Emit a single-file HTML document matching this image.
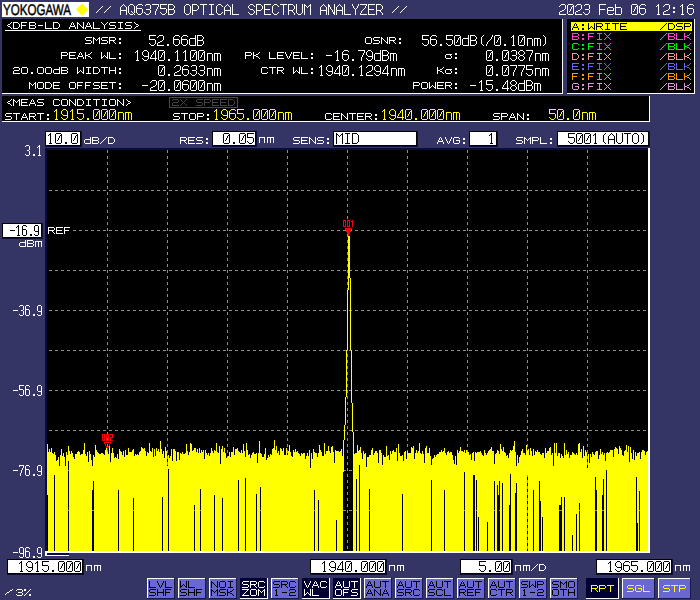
<!DOCTYPE html>
<html><head><meta charset="utf-8"><style>html,body{margin:0;padding:0;background:#343564;overflow:hidden}svg{display:block}</style></head>
<body><svg width="700" height="600" viewBox="0 0 700 600" shape-rendering="crispEdges">
<defs><path id="L2f" d="M6 0h1v1h-1zM5 1h1v1h-1zM4 2h1v1h-1zM3 3h1v1h-1zM2 4h1v1h-1zM1 5h1v1h-1zM0 6h1v1h-1z"/><path id="N41" d="M3 0h1v1h-1zM2 1h1v1h-1zM4 1h1v1h-1zM1 2h1v1h-1zM5 2h1v1h-1zM0 3h1v1h-1zM6 3h1v1h-1zM0 4h1v1h-1zM6 4h1v1h-1zM0 5h1v1h-1zM6 5h1v1h-1zM0 6h7v1h-7zM0 7h1v1h-1zM6 7h1v1h-1zM0 8h1v1h-1zM6 8h1v1h-1zM0 9h1v1h-1zM6 9h1v1h-1zM0 10h1v1h-1zM6 10h1v1h-1z"/><path id="N51" d="M2 0h3v1h-3zM1 1h1v1h-1zM5 1h1v1h-1zM0 2h1v1h-1zM6 2h1v1h-1zM0 3h1v1h-1zM6 3h1v1h-1zM0 4h1v1h-1zM6 4h1v1h-1zM0 5h1v1h-1zM6 5h1v1h-1zM0 6h1v1h-1zM6 6h1v1h-1zM0 7h1v1h-1zM3 7h1v1h-1zM6 7h1v1h-1zM0 8h1v1h-1zM4 8h1v1h-1zM6 8h1v1h-1zM1 9h1v1h-1zM5 9h1v1h-1zM2 10h3v1h-3zM6 10h1v1h-1z"/><path id="N36" d="M2 0h4v1h-4zM1 1h1v1h-1zM6 1h1v1h-1zM0 2h1v1h-1zM0 3h1v1h-1zM0 4h6v1h-6zM0 5h1v1h-1zM6 5h1v1h-1zM0 6h1v1h-1zM6 6h1v1h-1zM0 7h1v1h-1zM6 7h1v1h-1zM0 8h1v1h-1zM6 8h1v1h-1zM1 9h1v1h-1zM5 9h1v1h-1zM2 10h3v1h-3z"/><path id="N33" d="M2 0h4v1h-4zM1 1h1v1h-1zM6 1h1v1h-1zM6 2h1v1h-1zM6 3h1v1h-1zM6 4h1v1h-1zM2 5h4v1h-4zM6 6h1v1h-1zM6 7h1v1h-1zM0 8h1v1h-1zM6 8h1v1h-1zM1 9h1v1h-1zM5 9h1v1h-1zM2 10h3v1h-3z"/><path id="N37" d="M0 0h7v1h-7zM6 1h1v1h-1zM6 2h1v1h-1zM5 3h1v1h-1zM5 4h1v1h-1zM4 5h1v1h-1zM4 6h1v1h-1zM3 7h1v1h-1zM3 8h1v1h-1zM3 9h1v1h-1zM3 10h1v1h-1z"/><path id="N35" d="M0 0h7v1h-7zM0 1h1v1h-1zM0 2h1v1h-1zM0 3h1v1h-1zM0 4h6v1h-6zM6 5h1v1h-1zM6 6h1v1h-1zM6 7h1v1h-1zM0 8h1v1h-1zM6 8h1v1h-1zM1 9h1v1h-1zM5 9h1v1h-1zM2 10h3v1h-3z"/><path id="N42" d="M0 0h5v1h-5zM0 1h1v1h-1zM5 1h1v1h-1zM0 2h1v1h-1zM6 2h1v1h-1zM0 3h1v1h-1zM6 3h1v1h-1zM0 4h1v1h-1zM5 4h1v1h-1zM0 5h6v1h-6zM0 6h1v1h-1zM6 6h1v1h-1zM0 7h1v1h-1zM6 7h1v1h-1zM0 8h1v1h-1zM6 8h1v1h-1zM0 9h1v1h-1zM5 9h1v1h-1zM0 10h5v1h-5z"/><path id="N4f" d="M2 0h3v1h-3zM1 1h1v1h-1zM5 1h1v1h-1zM0 2h1v1h-1zM6 2h1v1h-1zM0 3h1v1h-1zM6 3h1v1h-1zM0 4h1v1h-1zM6 4h1v1h-1zM0 5h1v1h-1zM6 5h1v1h-1zM0 6h1v1h-1zM6 6h1v1h-1zM0 7h1v1h-1zM6 7h1v1h-1zM0 8h1v1h-1zM6 8h1v1h-1zM1 9h1v1h-1zM5 9h1v1h-1zM2 10h3v1h-3z"/><path id="N50" d="M0 0h5v1h-5zM0 1h1v1h-1zM5 1h1v1h-1zM0 2h1v1h-1zM6 2h1v1h-1zM0 3h1v1h-1zM6 3h1v1h-1zM0 4h1v1h-1zM6 4h1v1h-1zM0 5h1v1h-1zM5 5h1v1h-1zM0 6h5v1h-5zM0 7h1v1h-1zM0 8h1v1h-1zM0 9h1v1h-1zM0 10h1v1h-1z"/><path id="N54" d="M0 0h7v1h-7zM3 1h1v1h-1zM3 2h1v1h-1zM3 3h1v1h-1zM3 4h1v1h-1zM3 5h1v1h-1zM3 6h1v1h-1zM3 7h1v1h-1zM3 8h1v1h-1zM3 9h1v1h-1zM3 10h1v1h-1z"/><path id="N49" d="M1 0h5v1h-5zM3 1h1v1h-1zM3 2h1v1h-1zM3 3h1v1h-1zM3 4h1v1h-1zM3 5h1v1h-1zM3 6h1v1h-1zM3 7h1v1h-1zM3 8h1v1h-1zM3 9h1v1h-1zM1 10h5v1h-5z"/><path id="N43" d="M2 0h3v1h-3zM1 1h1v1h-1zM5 1h1v1h-1zM0 2h1v1h-1zM6 2h1v1h-1zM0 3h1v1h-1zM0 4h1v1h-1zM0 5h1v1h-1zM0 6h1v1h-1zM0 7h1v1h-1zM0 8h1v1h-1zM6 8h1v1h-1zM1 9h1v1h-1zM5 9h1v1h-1zM2 10h3v1h-3z"/><path id="N4c" d="M0 0h1v1h-1zM0 1h1v1h-1zM0 2h1v1h-1zM0 3h1v1h-1zM0 4h1v1h-1zM0 5h1v1h-1zM0 6h1v1h-1zM0 7h1v1h-1zM0 8h1v1h-1zM0 9h1v1h-1zM0 10h7v1h-7z"/><path id="N53" d="M2 0h3v1h-3zM1 1h1v1h-1zM5 1h1v1h-1zM0 2h1v1h-1zM6 2h1v1h-1zM0 3h1v1h-1zM1 4h1v1h-1zM2 5h3v1h-3zM5 6h1v1h-1zM6 7h1v1h-1zM0 8h1v1h-1zM6 8h1v1h-1zM1 9h1v1h-1zM5 9h1v1h-1zM2 10h3v1h-3z"/><path id="N45" d="M0 0h7v1h-7zM0 1h1v1h-1zM0 2h1v1h-1zM0 3h1v1h-1zM0 4h1v1h-1zM0 5h6v1h-6zM0 6h1v1h-1zM0 7h1v1h-1zM0 8h1v1h-1zM0 9h1v1h-1zM0 10h7v1h-7z"/><path id="N52" d="M0 0h5v1h-5zM0 1h1v1h-1zM5 1h1v1h-1zM0 2h1v1h-1zM6 2h1v1h-1zM0 3h1v1h-1zM6 3h1v1h-1zM0 4h1v1h-1zM6 4h1v1h-1zM0 5h1v1h-1zM5 5h1v1h-1zM0 6h5v1h-5zM0 7h1v1h-1zM4 7h1v1h-1zM0 8h1v1h-1zM5 8h1v1h-1zM0 9h1v1h-1zM6 9h1v1h-1zM0 10h1v1h-1zM6 10h1v1h-1z"/><path id="N55" d="M0 0h1v1h-1zM6 0h1v1h-1zM0 1h1v1h-1zM6 1h1v1h-1zM0 2h1v1h-1zM6 2h1v1h-1zM0 3h1v1h-1zM6 3h1v1h-1zM0 4h1v1h-1zM6 4h1v1h-1zM0 5h1v1h-1zM6 5h1v1h-1zM0 6h1v1h-1zM6 6h1v1h-1zM0 7h1v1h-1zM6 7h1v1h-1zM0 8h1v1h-1zM6 8h1v1h-1zM1 9h1v1h-1zM5 9h1v1h-1zM2 10h3v1h-3z"/><path id="N4d" d="M0 0h1v1h-1zM6 0h1v1h-1zM0 1h2v1h-2zM5 1h2v1h-2zM0 2h1v1h-1zM2 2h1v1h-1zM4 2h1v1h-1zM6 2h1v1h-1zM0 3h1v1h-1zM3 3h1v1h-1zM6 3h1v1h-1zM0 4h1v1h-1zM6 4h1v1h-1zM0 5h1v1h-1zM6 5h1v1h-1zM0 6h1v1h-1zM6 6h1v1h-1zM0 7h1v1h-1zM6 7h1v1h-1zM0 8h1v1h-1zM6 8h1v1h-1zM0 9h1v1h-1zM6 9h1v1h-1zM0 10h1v1h-1zM6 10h1v1h-1z"/><path id="N4e" d="M0 0h1v1h-1zM6 0h1v1h-1zM0 1h2v1h-2zM6 1h1v1h-1zM0 2h2v1h-2zM6 2h1v1h-1zM0 3h1v1h-1zM2 3h1v1h-1zM6 3h1v1h-1zM0 4h1v1h-1zM2 4h1v1h-1zM6 4h1v1h-1zM0 5h1v1h-1zM3 5h1v1h-1zM6 5h1v1h-1zM0 6h1v1h-1zM4 6h1v1h-1zM6 6h1v1h-1zM0 7h1v1h-1zM4 7h1v1h-1zM6 7h1v1h-1zM0 8h1v1h-1zM5 8h2v1h-2zM0 9h1v1h-1zM5 9h2v1h-2zM0 10h1v1h-1zM6 10h1v1h-1z"/><path id="N59" d="M0 0h1v1h-1zM6 0h1v1h-1zM0 1h1v1h-1zM6 1h1v1h-1zM1 2h1v1h-1zM5 2h1v1h-1zM1 3h1v1h-1zM5 3h1v1h-1zM2 4h1v1h-1zM4 4h1v1h-1zM3 5h1v1h-1zM3 6h1v1h-1zM3 7h1v1h-1zM3 8h1v1h-1zM3 9h1v1h-1zM3 10h1v1h-1z"/><path id="N5a" d="M0 0h7v1h-7zM6 1h1v1h-1zM5 2h1v1h-1zM5 3h1v1h-1zM4 4h1v1h-1zM3 5h1v1h-1zM2 6h1v1h-1zM1 7h1v1h-1zM1 8h1v1h-1zM0 9h1v1h-1zM0 10h7v1h-7z"/><path id="N32" d="M2 0h4v1h-4zM1 1h1v1h-1zM6 1h1v1h-1zM0 2h1v1h-1zM6 2h1v1h-1zM6 3h1v1h-1zM6 4h1v1h-1zM5 5h1v1h-1zM3 6h2v1h-2zM1 7h2v1h-2zM0 8h1v1h-1zM0 9h1v1h-1zM0 10h7v1h-7z"/><path id="N30" d="M1 0h5v1h-5zM0 1h1v1h-1zM6 1h1v1h-1zM0 2h1v1h-1zM5 2h2v1h-2zM0 3h1v1h-1zM4 3h1v1h-1zM6 3h1v1h-1zM0 4h1v1h-1zM4 4h1v1h-1zM6 4h1v1h-1zM0 5h1v1h-1zM3 5h1v1h-1zM6 5h1v1h-1zM0 6h1v1h-1zM3 6h1v1h-1zM6 6h1v1h-1zM0 7h1v1h-1zM2 7h1v1h-1zM6 7h1v1h-1zM0 8h1v1h-1zM6 8h1v1h-1zM0 9h1v1h-1zM6 9h1v1h-1zM1 10h5v1h-5z"/><path id="N46" d="M0 0h7v1h-7zM0 1h1v1h-1zM0 2h1v1h-1zM0 3h1v1h-1zM0 4h1v1h-1zM0 5h6v1h-6zM0 6h1v1h-1zM0 7h1v1h-1zM0 8h1v1h-1zM0 9h1v1h-1zM0 10h1v1h-1z"/><path id="N65" d="M1 3h5v1h-5zM0 4h1v1h-1zM6 4h1v1h-1zM0 5h1v1h-1zM6 5h1v1h-1zM0 6h7v1h-7zM0 7h1v1h-1zM0 8h1v1h-1zM0 9h1v1h-1zM6 9h1v1h-1zM1 10h5v1h-5z"/><path id="N62" d="M0 0h1v1h-1zM0 1h1v1h-1zM0 2h1v1h-1zM0 3h6v1h-6zM0 4h1v1h-1zM6 4h1v1h-1zM0 5h1v1h-1zM6 5h1v1h-1zM0 6h1v1h-1zM6 6h1v1h-1zM0 7h1v1h-1zM6 7h1v1h-1zM0 8h1v1h-1zM6 8h1v1h-1zM0 9h1v1h-1zM6 9h1v1h-1zM0 10h6v1h-6z"/><path id="N31" d="M3 0h1v1h-1zM2 1h2v1h-2zM1 2h1v1h-1zM3 2h1v1h-1zM3 3h1v1h-1zM3 4h1v1h-1zM3 5h1v1h-1zM3 6h1v1h-1zM3 7h1v1h-1zM3 8h1v1h-1zM3 9h1v1h-1zM2 10h3v1h-3z"/><path id="N3a" d="M2 3h2v1h-2zM2 4h2v1h-2zM2 7h2v1h-2zM2 8h2v1h-2z"/><path id="L3c" d="M6 0h1v1h-1zM5 1h1v1h-1zM3 2h2v1h-2zM2 3h1v1h-1zM3 4h2v1h-2zM5 5h1v1h-1zM6 6h1v1h-1z"/><path id="L44" d="M0 0h5v1h-5zM0 1h1v1h-1zM5 1h1v1h-1zM0 2h1v1h-1zM6 2h1v1h-1zM0 3h1v1h-1zM6 3h1v1h-1zM0 4h1v1h-1zM6 4h1v1h-1zM0 5h1v1h-1zM5 5h1v1h-1zM0 6h5v1h-5z"/><path id="L46" d="M0 0h6v1h-6zM0 1h1v1h-1zM0 2h1v1h-1zM0 3h5v1h-5zM0 4h1v1h-1zM0 5h1v1h-1zM0 6h1v1h-1z"/><path id="L42" d="M0 0h6v1h-6zM0 1h1v1h-1zM6 1h1v1h-1zM0 2h1v1h-1zM6 2h1v1h-1zM0 3h6v1h-6zM0 4h1v1h-1zM6 4h1v1h-1zM0 5h1v1h-1zM6 5h1v1h-1zM0 6h6v1h-6z"/><path id="L2d" d="M1 3h5v1h-5z"/><path id="L4c" d="M0 0h1v1h-1zM0 1h1v1h-1zM0 2h1v1h-1zM0 3h1v1h-1zM0 4h1v1h-1zM0 5h1v1h-1zM0 6h7v1h-7z"/><path id="L41" d="M3 0h1v1h-1zM2 1h1v1h-1zM4 1h1v1h-1zM2 2h1v1h-1zM4 2h1v1h-1zM1 3h1v1h-1zM5 3h1v1h-1zM1 4h5v1h-5zM0 5h1v1h-1zM6 5h1v1h-1zM0 6h1v1h-1zM6 6h1v1h-1z"/><path id="L4e" d="M0 0h1v1h-1zM6 0h1v1h-1zM0 1h2v1h-2zM6 1h1v1h-1zM0 2h1v1h-1zM2 2h1v1h-1zM6 2h1v1h-1zM0 3h1v1h-1zM3 3h1v1h-1zM6 3h1v1h-1zM0 4h1v1h-1zM4 4h1v1h-1zM6 4h1v1h-1zM0 5h1v1h-1zM5 5h2v1h-2zM0 6h1v1h-1zM6 6h1v1h-1z"/><path id="L59" d="M0 0h1v1h-1zM6 0h1v1h-1zM1 1h1v1h-1zM5 1h1v1h-1zM2 2h1v1h-1zM4 2h1v1h-1zM3 3h1v1h-1zM3 4h1v1h-1zM3 5h1v1h-1zM3 6h1v1h-1z"/><path id="L53" d="M1 0h6v1h-6zM0 1h1v1h-1zM0 2h1v1h-1zM1 3h5v1h-5zM6 4h1v1h-1zM6 5h1v1h-1zM0 6h6v1h-6z"/><path id="L49" d="M1 0h5v1h-5zM3 1h1v1h-1zM3 2h1v1h-1zM3 3h1v1h-1zM3 4h1v1h-1zM3 5h1v1h-1zM1 6h5v1h-5z"/><path id="L3e" d="M1 0h1v1h-1zM2 1h1v1h-1zM3 2h2v1h-2zM5 3h1v1h-1zM3 4h2v1h-2zM2 5h1v1h-1zM1 6h1v1h-1z"/><path id="L4d" d="M0 0h1v1h-1zM6 0h1v1h-1zM0 1h2v1h-2zM5 1h2v1h-2zM0 2h1v1h-1zM2 2h1v1h-1zM4 2h1v1h-1zM6 2h1v1h-1zM0 3h1v1h-1zM3 3h1v1h-1zM6 3h1v1h-1zM0 4h1v1h-1zM6 4h1v1h-1zM0 5h1v1h-1zM6 5h1v1h-1zM0 6h1v1h-1zM6 6h1v1h-1z"/><path id="L52" d="M0 0h6v1h-6zM0 1h1v1h-1zM6 1h1v1h-1zM0 2h1v1h-1zM6 2h1v1h-1zM0 3h6v1h-6zM0 4h1v1h-1zM4 4h1v1h-1zM0 5h1v1h-1zM5 5h1v1h-1zM0 6h1v1h-1zM6 6h1v1h-1z"/><path id="L3a" d="M2 1h2v1h-2zM2 2h2v1h-2zM2 5h2v1h-2zM2 6h2v1h-2z"/><path id="N2e" d="M2 9h2v1h-2zM2 10h2v1h-2z"/><path id="N64" d="M6 0h1v1h-1zM6 1h1v1h-1zM6 2h1v1h-1zM1 3h6v1h-6zM0 4h1v1h-1zM6 4h1v1h-1zM0 5h1v1h-1zM6 5h1v1h-1zM0 6h1v1h-1zM6 6h1v1h-1zM0 7h1v1h-1zM6 7h1v1h-1zM0 8h1v1h-1zM6 8h1v1h-1zM0 9h1v1h-1zM6 9h1v1h-1zM1 10h6v1h-6z"/><path id="L4f" d="M1 0h5v1h-5zM0 1h1v1h-1zM6 1h1v1h-1zM0 2h1v1h-1zM6 2h1v1h-1zM0 3h1v1h-1zM6 3h1v1h-1zM0 4h1v1h-1zM6 4h1v1h-1zM0 5h1v1h-1zM6 5h1v1h-1zM1 6h5v1h-5z"/><path id="N28" d="M5 0h1v1h-1zM4 1h1v1h-1zM3 2h1v1h-1zM3 3h1v1h-1zM3 4h1v1h-1zM3 5h1v1h-1zM3 6h1v1h-1zM3 7h1v1h-1zM3 8h1v1h-1zM4 9h1v1h-1zM5 10h1v1h-1z"/><path id="N2f" d="M6 0h1v1h-1zM6 1h1v1h-1zM5 2h1v1h-1zM5 3h1v1h-1zM4 4h1v1h-1zM3 5h1v1h-1zM2 6h1v1h-1zM1 7h1v1h-1zM1 8h1v1h-1zM0 9h1v1h-1zM0 10h1v1h-1z"/><path id="N6e" d="M1 3h5v1h-5zM1 4h1v1h-1zM6 4h1v1h-1zM1 5h1v1h-1zM6 5h1v1h-1zM1 6h1v1h-1zM6 6h1v1h-1zM1 7h1v1h-1zM6 7h1v1h-1zM1 8h1v1h-1zM6 8h1v1h-1zM1 9h1v1h-1zM6 9h1v1h-1zM1 10h1v1h-1zM6 10h1v1h-1z"/><path id="N6d" d="M0 3h6v1h-6zM0 4h1v1h-1zM3 4h1v1h-1zM6 4h1v1h-1zM0 5h1v1h-1zM3 5h1v1h-1zM6 5h1v1h-1zM0 6h1v1h-1zM3 6h1v1h-1zM6 6h1v1h-1zM0 7h1v1h-1zM3 7h1v1h-1zM6 7h1v1h-1zM0 8h1v1h-1zM3 8h1v1h-1zM6 8h1v1h-1zM0 9h1v1h-1zM3 9h1v1h-1zM6 9h1v1h-1zM0 10h1v1h-1zM3 10h1v1h-1zM6 10h1v1h-1z"/><path id="N29" d="M1 0h1v1h-1zM2 1h1v1h-1zM3 2h1v1h-1zM3 3h1v1h-1zM3 4h1v1h-1zM3 5h1v1h-1zM3 6h1v1h-1zM3 7h1v1h-1zM3 8h1v1h-1zM2 9h1v1h-1zM1 10h1v1h-1z"/><path id="L50" d="M0 0h6v1h-6zM0 1h1v1h-1zM6 1h1v1h-1zM0 2h1v1h-1zM6 2h1v1h-1zM0 3h6v1h-6zM0 4h1v1h-1zM0 5h1v1h-1zM0 6h1v1h-1z"/><path id="L45" d="M0 0h7v1h-7zM0 1h1v1h-1zM0 2h1v1h-1zM0 3h6v1h-6zM0 4h1v1h-1zM0 5h1v1h-1zM0 6h7v1h-7z"/><path id="L4b" d="M0 0h1v1h-1zM6 0h1v1h-1zM0 1h1v1h-1zM5 1h1v1h-1zM0 2h1v1h-1zM3 2h2v1h-2zM0 3h3v1h-3zM0 4h1v1h-1zM3 4h2v1h-2zM0 5h1v1h-1zM5 5h1v1h-1zM0 6h1v1h-1zM6 6h1v1h-1z"/><path id="L57" d="M0 0h1v1h-1zM6 0h1v1h-1zM0 1h1v1h-1zM6 1h1v1h-1zM0 2h1v1h-1zM6 2h1v1h-1zM0 3h1v1h-1zM3 3h1v1h-1zM6 3h1v1h-1zM0 4h1v1h-1zM2 4h1v1h-1zM4 4h1v1h-1zM6 4h1v1h-1zM0 5h2v1h-2zM5 5h2v1h-2zM0 6h1v1h-1zM6 6h1v1h-1z"/><path id="N39" d="M2 0h3v1h-3zM1 1h1v1h-1zM5 1h1v1h-1zM0 2h1v1h-1zM6 2h1v1h-1zM0 3h1v1h-1zM6 3h1v1h-1zM0 4h1v1h-1zM6 4h1v1h-1zM1 5h1v1h-1zM6 5h1v1h-1zM2 6h5v1h-5zM6 7h1v1h-1zM0 8h1v1h-1zM6 8h1v1h-1zM1 9h1v1h-1zM5 9h1v1h-1zM2 10h3v1h-3z"/><path id="N34" d="M5 0h1v1h-1zM4 1h2v1h-2zM3 2h1v1h-1zM5 2h1v1h-1zM3 3h1v1h-1zM5 3h1v1h-1zM2 4h1v1h-1zM5 4h1v1h-1zM1 5h1v1h-1zM5 5h1v1h-1zM1 6h1v1h-1zM5 6h1v1h-1zM0 7h1v1h-1zM5 7h1v1h-1zM0 8h7v1h-7zM5 9h1v1h-1zM5 10h1v1h-1z"/><path id="L56" d="M0 0h1v1h-1zM6 0h1v1h-1zM0 1h1v1h-1zM6 1h1v1h-1zM1 2h1v1h-1zM5 2h1v1h-1zM1 3h1v1h-1zM5 3h1v1h-1zM2 4h1v1h-1zM4 4h1v1h-1zM2 5h1v1h-1zM4 5h1v1h-1zM3 6h1v1h-1z"/><path id="N2d" d="M0 5h6v1h-6z"/><path id="L3c3" d="M1 2h6v1h-6zM0 3h1v1h-1zM5 3h1v1h-1zM0 4h1v1h-1zM6 4h1v1h-1zM0 5h1v1h-1zM6 5h1v1h-1zM1 6h5v1h-5z"/><path id="N38" d="M2 0h3v1h-3zM1 1h1v1h-1zM5 1h1v1h-1zM0 2h1v1h-1zM6 2h1v1h-1zM0 3h1v1h-1zM6 3h1v1h-1zM1 4h1v1h-1zM5 4h1v1h-1zM2 5h3v1h-3zM1 6h1v1h-1zM5 6h1v1h-1zM0 7h1v1h-1zM6 7h1v1h-1zM0 8h1v1h-1zM6 8h1v1h-1zM1 9h1v1h-1zM5 9h1v1h-1zM2 10h3v1h-3z"/><path id="L32" d="M1 0h5v1h-5zM0 1h1v1h-1zM6 1h1v1h-1zM6 2h1v1h-1zM1 3h5v1h-5zM0 4h1v1h-1zM0 5h1v1h-1zM0 6h7v1h-7z"/><path id="L30" d="M1 0h5v1h-5zM0 1h1v1h-1zM6 1h1v1h-1zM0 2h1v1h-1zM6 2h1v1h-1zM0 3h1v1h-1zM6 3h1v1h-1zM0 4h1v1h-1zM6 4h1v1h-1zM0 5h1v1h-1zM6 5h1v1h-1zM1 6h5v1h-5z"/><path id="L2e" d="M2 5h2v1h-2zM2 6h2v1h-2z"/><path id="L64" d="M6 0h1v1h-1zM6 1h1v1h-1zM1 2h6v1h-6zM0 3h1v1h-1zM6 3h1v1h-1zM0 4h1v1h-1zM6 4h1v1h-1zM0 5h1v1h-1zM6 5h1v1h-1zM1 6h6v1h-6z"/><path id="L54" d="M0 0h7v1h-7zM3 1h1v1h-1zM3 2h1v1h-1zM3 3h1v1h-1zM3 4h1v1h-1zM3 5h1v1h-1zM3 6h1v1h-1z"/><path id="L48" d="M0 0h1v1h-1zM6 0h1v1h-1zM0 1h1v1h-1zM6 1h1v1h-1zM0 2h1v1h-1zM6 2h1v1h-1zM0 3h7v1h-7zM0 4h1v1h-1zM6 4h1v1h-1zM0 5h1v1h-1zM6 5h1v1h-1zM0 6h1v1h-1zM6 6h1v1h-1z"/><path id="L43" d="M1 0h5v1h-5zM0 1h1v1h-1zM6 1h1v1h-1zM0 2h1v1h-1zM0 3h1v1h-1zM0 4h1v1h-1zM0 5h1v1h-1zM6 5h1v1h-1zM1 6h5v1h-5z"/><path id="L58" d="M0 0h1v1h-1zM6 0h1v1h-1zM1 1h1v1h-1zM5 1h1v1h-1zM2 2h1v1h-1zM4 2h1v1h-1zM3 3h1v1h-1zM2 4h1v1h-1zM4 4h1v1h-1zM1 5h1v1h-1zM5 5h1v1h-1zM0 6h1v1h-1zM6 6h1v1h-1z"/><path id="L47" d="M1 0h5v1h-5zM0 1h1v1h-1zM6 1h1v1h-1zM0 2h1v1h-1zM0 3h1v1h-1zM3 3h4v1h-4zM0 4h1v1h-1zM6 4h1v1h-1zM0 5h1v1h-1zM6 5h1v1h-1zM1 6h5v1h-5z"/><path id="L6e" d="M0 1h6v1h-6zM0 2h1v1h-1zM5 2h1v1h-1zM0 3h1v1h-1zM5 3h1v1h-1zM0 4h1v1h-1zM5 4h1v1h-1zM0 5h1v1h-1zM5 5h1v1h-1zM0 6h1v1h-1zM5 6h1v1h-1z"/><path id="L6d" d="M0 1h7v1h-7zM0 2h1v1h-1zM3 2h1v1h-1zM6 2h1v1h-1zM0 3h1v1h-1zM3 3h1v1h-1zM6 3h1v1h-1zM0 4h1v1h-1zM3 4h1v1h-1zM6 4h1v1h-1zM0 5h1v1h-1zM3 5h1v1h-1zM6 5h1v1h-1zM0 6h1v1h-1zM3 6h1v1h-1zM6 6h1v1h-1z"/><path id="N44" d="M0 0h5v1h-5zM0 1h1v1h-1zM5 1h1v1h-1zM0 2h1v1h-1zM6 2h1v1h-1zM0 3h1v1h-1zM6 3h1v1h-1zM0 4h1v1h-1zM6 4h1v1h-1zM0 5h1v1h-1zM6 5h1v1h-1zM0 6h1v1h-1zM6 6h1v1h-1zM0 7h1v1h-1zM6 7h1v1h-1zM0 8h1v1h-1zM6 8h1v1h-1zM0 9h1v1h-1zM5 9h1v1h-1zM0 10h5v1h-5z"/><path id="M30" d="M0 0h3v1h-3zM0 1h1v1h-1zM2 1h1v1h-1zM0 2h1v1h-1zM2 2h1v1h-1zM0 3h1v1h-1zM2 3h1v1h-1zM0 4h1v1h-1zM2 4h1v1h-1zM0 5h1v1h-1zM2 5h1v1h-1zM0 6h3v1h-3z"/><path id="M31" d="M1 0h1v1h-1zM0 1h2v1h-2zM1 2h1v1h-1zM1 3h1v1h-1zM1 4h1v1h-1zM1 5h1v1h-1zM1 6h1v1h-1z"/><path id="M32" d="M0 0h3v1h-3zM2 1h1v1h-1zM2 2h1v1h-1zM0 3h3v1h-3zM0 4h1v1h-1zM0 5h1v1h-1zM0 6h3v1h-3z"/><path id="A33" d="M1 0h3v1h-3zM0 1h1v1h-1zM4 1h1v1h-1zM4 2h1v1h-1zM4 3h1v1h-1zM4 4h1v1h-1zM2 5h2v1h-2zM4 6h1v1h-1zM4 7h1v1h-1zM4 8h1v1h-1zM0 9h1v1h-1zM4 9h1v1h-1zM1 10h3v1h-3z"/><path id="A2e" d="M2 9h2v1h-2zM2 10h2v1h-2z"/><path id="A31" d="M2 0h1v1h-1zM1 1h2v1h-2zM0 2h1v1h-1zM2 2h1v1h-1zM2 3h1v1h-1zM2 4h1v1h-1zM2 5h1v1h-1zM2 6h1v1h-1zM2 7h1v1h-1zM2 8h1v1h-1zM2 9h1v1h-1zM1 10h3v1h-3z"/><path id="A2d" d="M0 5h5v1h-5z"/><path id="A36" d="M1 0h3v1h-3zM0 1h1v1h-1zM4 1h1v1h-1zM0 2h1v1h-1zM0 3h1v1h-1zM0 4h4v1h-4zM0 5h1v1h-1zM4 5h1v1h-1zM0 6h1v1h-1zM4 6h1v1h-1zM0 7h1v1h-1zM4 7h1v1h-1zM0 8h1v1h-1zM4 8h1v1h-1zM0 9h1v1h-1zM4 9h1v1h-1zM1 10h3v1h-3z"/><path id="A39" d="M1 0h3v1h-3zM0 1h1v1h-1zM4 1h1v1h-1zM0 2h1v1h-1zM4 2h1v1h-1zM0 3h1v1h-1zM4 3h1v1h-1zM0 4h1v1h-1zM4 4h1v1h-1zM0 5h1v1h-1zM4 5h1v1h-1zM1 6h4v1h-4zM4 7h1v1h-1zM4 8h1v1h-1zM0 9h1v1h-1zM4 9h1v1h-1zM1 10h3v1h-3z"/><path id="A35" d="M0 0h5v1h-5zM0 1h1v1h-1zM0 2h1v1h-1zM0 3h1v1h-1zM0 4h4v1h-4zM4 5h1v1h-1zM4 6h1v1h-1zM4 7h1v1h-1zM4 8h1v1h-1zM0 9h1v1h-1zM4 9h1v1h-1zM1 10h3v1h-3z"/><path id="A37" d="M0 0h5v1h-5zM0 1h1v1h-1zM4 1h1v1h-1zM4 2h1v1h-1zM3 3h1v1h-1zM3 4h1v1h-1zM2 5h1v1h-1zM2 6h1v1h-1zM2 7h1v1h-1zM1 8h1v1h-1zM1 9h1v1h-1zM1 10h1v1h-1z"/><path id="L2044" d="M7 0h1v1h-1zM5 1h2v1h-2zM4 2h1v1h-1zM2 3h2v1h-2zM1 4h1v1h-1zM0 5h1v1h-1z"/><path id="L33" d="M1 0h5v1h-5zM0 1h1v1h-1zM6 1h1v1h-1zM6 2h1v1h-1zM2 3h4v1h-4zM6 4h1v1h-1zM0 5h1v1h-1zM6 5h1v1h-1zM1 6h5v1h-5z"/><path id="L25" d="M0 0h2v1h-2zM6 0h1v1h-1zM0 1h2v1h-2zM5 1h1v1h-1zM4 2h1v1h-1zM3 3h1v1h-1zM2 4h1v1h-1zM1 5h1v1h-1zM5 5h2v1h-2zM0 6h1v1h-1zM5 6h2v1h-2z"/><path id="L5a" d="M0 0h7v1h-7zM5 1h1v1h-1zM4 2h1v1h-1zM3 3h1v1h-1zM2 4h1v1h-1zM1 5h1v1h-1zM0 6h7v1h-7z"/><path id="L31" d="M3 0h1v1h-1zM2 1h2v1h-2zM3 2h1v1h-1zM3 3h1v1h-1zM3 4h1v1h-1zM3 5h1v1h-1zM2 6h3v1h-3z"/><path id="L55" d="M0 0h1v1h-1zM6 0h1v1h-1zM0 1h1v1h-1zM6 1h1v1h-1zM0 2h1v1h-1zM6 2h1v1h-1zM0 3h1v1h-1zM6 3h1v1h-1zM0 4h1v1h-1zM6 4h1v1h-1zM0 5h1v1h-1zM6 5h1v1h-1zM1 6h5v1h-5z"/></defs>
<rect x="0" y="0" width="700" height="600" fill="#343564" />
<rect x="2" y="2" width="87" height="15" fill="#fff" />
<text x="3" y="15" font-family="Liberation Sans" font-size="15.4" fill="#000" stroke="#000" stroke-width="0.45" textLength="68" lengthAdjust="spacingAndGlyphs" style="text-rendering:geometricPrecision">YOKOGAWA</text>
<polygon points="82,3.5 88,9.6 82,15.7 76,9.6" fill="#ffff00" shape-rendering="geometricPrecision"/>
<g fill="#fff"><use href="#L2f" xlink:href="#L2f" x="96" y="6"/><use href="#L2f" xlink:href="#L2f" x="104" y="6"/></g>
<g fill="#fff"><use href="#N41" xlink:href="#N41" x="120" y="4"/><use href="#N51" xlink:href="#N51" x="128" y="4"/><use href="#N36" xlink:href="#N36" x="136" y="4"/><use href="#N33" xlink:href="#N33" x="144" y="4"/><use href="#N37" xlink:href="#N37" x="152" y="4"/><use href="#N35" xlink:href="#N35" x="160" y="4"/><use href="#N42" xlink:href="#N42" x="168" y="4"/><use href="#N4f" xlink:href="#N4f" x="184" y="4"/><use href="#N50" xlink:href="#N50" x="192" y="4"/><use href="#N54" xlink:href="#N54" x="200" y="4"/><use href="#N49" xlink:href="#N49" x="208" y="4"/><use href="#N43" xlink:href="#N43" x="216" y="4"/><use href="#N41" xlink:href="#N41" x="224" y="4"/><use href="#N4c" xlink:href="#N4c" x="232" y="4"/><use href="#N53" xlink:href="#N53" x="248" y="4"/><use href="#N50" xlink:href="#N50" x="256" y="4"/><use href="#N45" xlink:href="#N45" x="264" y="4"/><use href="#N43" xlink:href="#N43" x="272" y="4"/><use href="#N54" xlink:href="#N54" x="280" y="4"/><use href="#N52" xlink:href="#N52" x="288" y="4"/><use href="#N55" xlink:href="#N55" x="296" y="4"/><use href="#N4d" xlink:href="#N4d" x="304" y="4"/><use href="#N41" xlink:href="#N41" x="320" y="4"/><use href="#N4e" xlink:href="#N4e" x="328" y="4"/><use href="#N41" xlink:href="#N41" x="336" y="4"/><use href="#N4c" xlink:href="#N4c" x="344" y="4"/><use href="#N59" xlink:href="#N59" x="352" y="4"/><use href="#N5a" xlink:href="#N5a" x="360" y="4"/><use href="#N45" xlink:href="#N45" x="368" y="4"/><use href="#N52" xlink:href="#N52" x="376" y="4"/></g>
<g fill="#fff"><use href="#L2f" xlink:href="#L2f" x="392" y="6"/><use href="#L2f" xlink:href="#L2f" x="400" y="6"/></g>
<g fill="#fff"><use href="#N32" xlink:href="#N32" x="559" y="4"/><use href="#N30" xlink:href="#N30" x="567" y="4"/><use href="#N32" xlink:href="#N32" x="575" y="4"/><use href="#N33" xlink:href="#N33" x="583" y="4"/><use href="#N46" xlink:href="#N46" x="599" y="4"/><use href="#N65" xlink:href="#N65" x="607" y="4"/><use href="#N62" xlink:href="#N62" x="615" y="4"/><use href="#N30" xlink:href="#N30" x="631" y="4"/><use href="#N36" xlink:href="#N36" x="639" y="4"/><use href="#N31" xlink:href="#N31" x="655" y="4"/><use href="#N32" xlink:href="#N32" x="663" y="4"/><use href="#N3a" xlink:href="#N3a" x="671" y="4"/><use href="#N31" xlink:href="#N31" x="679" y="4"/><use href="#N36" xlink:href="#N36" x="687" y="4"/></g>
<rect x="2" y="19" width="561" height="75" fill="#fff" />
<rect x="2" y="19" width="560" height="74" fill="#000" />
<g fill="#fff"><use href="#L3c" xlink:href="#L3c" x="5" y="22"/><use href="#L44" xlink:href="#L44" x="13" y="22"/><use href="#L46" xlink:href="#L46" x="21" y="22"/><use href="#L42" xlink:href="#L42" x="29" y="22"/><use href="#L2d" xlink:href="#L2d" x="37" y="22"/><use href="#L4c" xlink:href="#L4c" x="45" y="22"/><use href="#L44" xlink:href="#L44" x="53" y="22"/><use href="#L41" xlink:href="#L41" x="69" y="22"/><use href="#L4e" xlink:href="#L4e" x="77" y="22"/><use href="#L41" xlink:href="#L41" x="85" y="22"/><use href="#L4c" xlink:href="#L4c" x="93" y="22"/><use href="#L59" xlink:href="#L59" x="101" y="22"/><use href="#L53" xlink:href="#L53" x="109" y="22"/><use href="#L49" xlink:href="#L49" x="117" y="22"/><use href="#L53" xlink:href="#L53" x="125" y="22"/><use href="#L3e" xlink:href="#L3e" x="133" y="22"/></g>
<rect x="5" y="30" width="136" height="1" fill="#fff" />
<g fill="#fff"><use href="#L53" xlink:href="#L53" x="85" y="37"/><use href="#L4d" xlink:href="#L4d" x="93" y="37"/><use href="#L53" xlink:href="#L53" x="101" y="37"/><use href="#L52" xlink:href="#L52" x="109" y="37"/><use href="#L3a" xlink:href="#L3a" x="117" y="37"/></g>
<g fill="#fff"><use href="#N35" xlink:href="#N35" x="149" y="35"/><use href="#N32" xlink:href="#N32" x="157" y="35"/><use href="#N2e" xlink:href="#N2e" x="165" y="35"/><use href="#N36" xlink:href="#N36" x="173" y="35"/><use href="#N36" xlink:href="#N36" x="181" y="35"/><use href="#N64" xlink:href="#N64" x="189" y="35"/><use href="#N42" xlink:href="#N42" x="197" y="35"/></g>
<g fill="#fff"><use href="#L4f" xlink:href="#L4f" x="365" y="37"/><use href="#L53" xlink:href="#L53" x="373" y="37"/><use href="#L4e" xlink:href="#L4e" x="381" y="37"/><use href="#L52" xlink:href="#L52" x="389" y="37"/><use href="#L3a" xlink:href="#L3a" x="397" y="37"/></g>
<g fill="#fff"><use href="#N35" xlink:href="#N35" x="422" y="35"/><use href="#N36" xlink:href="#N36" x="430" y="35"/><use href="#N2e" xlink:href="#N2e" x="438" y="35"/><use href="#N35" xlink:href="#N35" x="446" y="35"/><use href="#N30" xlink:href="#N30" x="454" y="35"/><use href="#N64" xlink:href="#N64" x="462" y="35"/><use href="#N42" xlink:href="#N42" x="470" y="35"/><use href="#N28" xlink:href="#N28" x="478" y="35"/><use href="#N2f" xlink:href="#N2f" x="486" y="35"/><use href="#N30" xlink:href="#N30" x="494" y="35"/><use href="#N2e" xlink:href="#N2e" x="502" y="35"/><use href="#N31" xlink:href="#N31" x="510" y="35"/><use href="#N30" xlink:href="#N30" x="518" y="35"/><use href="#N6e" xlink:href="#N6e" x="526" y="35"/><use href="#N6d" xlink:href="#N6d" x="534" y="35"/><use href="#N29" xlink:href="#N29" x="542" y="35"/></g>
<g fill="#fff"><use href="#L50" xlink:href="#L50" x="61" y="52"/><use href="#L45" xlink:href="#L45" x="69" y="52"/><use href="#L41" xlink:href="#L41" x="77" y="52"/><use href="#L4b" xlink:href="#L4b" x="85" y="52"/><use href="#L57" xlink:href="#L57" x="101" y="52"/><use href="#L4c" xlink:href="#L4c" x="109" y="52"/><use href="#L3a" xlink:href="#L3a" x="117" y="52"/></g>
<g fill="#fff"><use href="#N31" xlink:href="#N31" x="134" y="50"/><use href="#N39" xlink:href="#N39" x="142" y="50"/><use href="#N34" xlink:href="#N34" x="150" y="50"/><use href="#N30" xlink:href="#N30" x="158" y="50"/><use href="#N2e" xlink:href="#N2e" x="166" y="50"/><use href="#N31" xlink:href="#N31" x="174" y="50"/><use href="#N31" xlink:href="#N31" x="182" y="50"/><use href="#N30" xlink:href="#N30" x="190" y="50"/><use href="#N30" xlink:href="#N30" x="198" y="50"/><use href="#N6e" xlink:href="#N6e" x="206" y="50"/><use href="#N6d" xlink:href="#N6d" x="214" y="50"/></g>
<g fill="#fff"><use href="#L50" xlink:href="#L50" x="245" y="52"/><use href="#L4b" xlink:href="#L4b" x="253" y="52"/><use href="#L4c" xlink:href="#L4c" x="269" y="52"/><use href="#L45" xlink:href="#L45" x="277" y="52"/><use href="#L56" xlink:href="#L56" x="285" y="52"/><use href="#L45" xlink:href="#L45" x="293" y="52"/><use href="#L4c" xlink:href="#L4c" x="301" y="52"/><use href="#L3a" xlink:href="#L3a" x="309" y="52"/></g>
<g fill="#fff"><use href="#N2d" xlink:href="#N2d" x="326" y="50"/><use href="#N31" xlink:href="#N31" x="334" y="50"/><use href="#N36" xlink:href="#N36" x="342" y="50"/><use href="#N2e" xlink:href="#N2e" x="350" y="50"/><use href="#N37" xlink:href="#N37" x="358" y="50"/><use href="#N39" xlink:href="#N39" x="366" y="50"/><use href="#N64" xlink:href="#N64" x="374" y="50"/><use href="#N42" xlink:href="#N42" x="382" y="50"/><use href="#N6d" xlink:href="#N6d" x="390" y="50"/></g>
<g fill="#fff"><use href="#L3c3" xlink:href="#L3c3" x="445" y="52"/><use href="#L3a" xlink:href="#L3a" x="453" y="52"/></g>
<g fill="#fff"><use href="#N30" xlink:href="#N30" x="486" y="50"/><use href="#N2e" xlink:href="#N2e" x="494" y="50"/><use href="#N30" xlink:href="#N30" x="502" y="50"/><use href="#N33" xlink:href="#N33" x="510" y="50"/><use href="#N38" xlink:href="#N38" x="518" y="50"/><use href="#N37" xlink:href="#N37" x="526" y="50"/><use href="#N6e" xlink:href="#N6e" x="534" y="50"/><use href="#N6d" xlink:href="#N6d" x="542" y="50"/></g>
<g fill="#fff"><use href="#L32" xlink:href="#L32" x="13" y="67"/><use href="#L30" xlink:href="#L30" x="21" y="67"/><use href="#L2e" xlink:href="#L2e" x="29" y="67"/><use href="#L30" xlink:href="#L30" x="37" y="67"/><use href="#L30" xlink:href="#L30" x="45" y="67"/><use href="#L64" xlink:href="#L64" x="53" y="67"/><use href="#L42" xlink:href="#L42" x="61" y="67"/><use href="#L57" xlink:href="#L57" x="77" y="67"/><use href="#L49" xlink:href="#L49" x="85" y="67"/><use href="#L44" xlink:href="#L44" x="93" y="67"/><use href="#L54" xlink:href="#L54" x="101" y="67"/><use href="#L48" xlink:href="#L48" x="109" y="67"/><use href="#L3a" xlink:href="#L3a" x="117" y="67"/></g>
<g fill="#fff"><use href="#N30" xlink:href="#N30" x="158" y="65"/><use href="#N2e" xlink:href="#N2e" x="166" y="65"/><use href="#N32" xlink:href="#N32" x="174" y="65"/><use href="#N36" xlink:href="#N36" x="182" y="65"/><use href="#N33" xlink:href="#N33" x="190" y="65"/><use href="#N33" xlink:href="#N33" x="198" y="65"/><use href="#N6e" xlink:href="#N6e" x="206" y="65"/><use href="#N6d" xlink:href="#N6d" x="214" y="65"/></g>
<g fill="#fff"><use href="#L43" xlink:href="#L43" x="261" y="67"/><use href="#L54" xlink:href="#L54" x="269" y="67"/><use href="#L52" xlink:href="#L52" x="277" y="67"/><use href="#L57" xlink:href="#L57" x="293" y="67"/><use href="#L4c" xlink:href="#L4c" x="301" y="67"/><use href="#L3a" xlink:href="#L3a" x="309" y="67"/></g>
<g fill="#fff"><use href="#N31" xlink:href="#N31" x="318" y="65"/><use href="#N39" xlink:href="#N39" x="326" y="65"/><use href="#N34" xlink:href="#N34" x="334" y="65"/><use href="#N30" xlink:href="#N30" x="342" y="65"/><use href="#N2e" xlink:href="#N2e" x="350" y="65"/><use href="#N31" xlink:href="#N31" x="358" y="65"/><use href="#N32" xlink:href="#N32" x="366" y="65"/><use href="#N39" xlink:href="#N39" x="374" y="65"/><use href="#N34" xlink:href="#N34" x="382" y="65"/><use href="#N6e" xlink:href="#N6e" x="390" y="65"/><use href="#N6d" xlink:href="#N6d" x="398" y="65"/></g>
<g fill="#fff"><use href="#L4b" xlink:href="#L4b" x="437" y="67"/><use href="#L3c3" xlink:href="#L3c3" x="445" y="67"/><use href="#L3a" xlink:href="#L3a" x="453" y="67"/></g>
<g fill="#fff"><use href="#N30" xlink:href="#N30" x="486" y="65"/><use href="#N2e" xlink:href="#N2e" x="494" y="65"/><use href="#N30" xlink:href="#N30" x="502" y="65"/><use href="#N37" xlink:href="#N37" x="510" y="65"/><use href="#N37" xlink:href="#N37" x="518" y="65"/><use href="#N35" xlink:href="#N35" x="526" y="65"/><use href="#N6e" xlink:href="#N6e" x="534" y="65"/><use href="#N6d" xlink:href="#N6d" x="542" y="65"/></g>
<g fill="#fff"><use href="#L4d" xlink:href="#L4d" x="29" y="82"/><use href="#L4f" xlink:href="#L4f" x="37" y="82"/><use href="#L44" xlink:href="#L44" x="45" y="82"/><use href="#L45" xlink:href="#L45" x="53" y="82"/><use href="#L4f" xlink:href="#L4f" x="69" y="82"/><use href="#L46" xlink:href="#L46" x="77" y="82"/><use href="#L46" xlink:href="#L46" x="85" y="82"/><use href="#L53" xlink:href="#L53" x="93" y="82"/><use href="#L45" xlink:href="#L45" x="101" y="82"/><use href="#L54" xlink:href="#L54" x="109" y="82"/><use href="#L3a" xlink:href="#L3a" x="117" y="82"/></g>
<g fill="#fff"><use href="#N2d" xlink:href="#N2d" x="142" y="80"/><use href="#N32" xlink:href="#N32" x="150" y="80"/><use href="#N30" xlink:href="#N30" x="158" y="80"/><use href="#N2e" xlink:href="#N2e" x="166" y="80"/><use href="#N30" xlink:href="#N30" x="174" y="80"/><use href="#N36" xlink:href="#N36" x="182" y="80"/><use href="#N30" xlink:href="#N30" x="190" y="80"/><use href="#N30" xlink:href="#N30" x="198" y="80"/><use href="#N6e" xlink:href="#N6e" x="206" y="80"/><use href="#N6d" xlink:href="#N6d" x="214" y="80"/></g>
<g fill="#fff"><use href="#L50" xlink:href="#L50" x="413" y="82"/><use href="#L4f" xlink:href="#L4f" x="421" y="82"/><use href="#L57" xlink:href="#L57" x="429" y="82"/><use href="#L45" xlink:href="#L45" x="437" y="82"/><use href="#L52" xlink:href="#L52" x="445" y="82"/><use href="#L3a" xlink:href="#L3a" x="453" y="82"/></g>
<g fill="#fff"><use href="#N2d" xlink:href="#N2d" x="470" y="80"/><use href="#N31" xlink:href="#N31" x="478" y="80"/><use href="#N35" xlink:href="#N35" x="486" y="80"/><use href="#N2e" xlink:href="#N2e" x="494" y="80"/><use href="#N34" xlink:href="#N34" x="502" y="80"/><use href="#N38" xlink:href="#N38" x="510" y="80"/><use href="#N64" xlink:href="#N64" x="518" y="80"/><use href="#N42" xlink:href="#N42" x="526" y="80"/><use href="#N6d" xlink:href="#N6d" x="534" y="80"/></g>
<rect x="567" y="19" width="128" height="75" fill="#fff" />
<rect x="567" y="19" width="127" height="74" fill="#000" />
<rect x="571" y="22" width="121" height="9" fill="#ffff00" />
<g fill="#000"><use href="#L41" xlink:href="#L41" x="572" y="23"/><use href="#L3a" xlink:href="#L3a" x="580" y="23"/><use href="#L57" xlink:href="#L57" x="588" y="23"/><use href="#L52" xlink:href="#L52" x="596" y="23"/><use href="#L49" xlink:href="#L49" x="604" y="23"/><use href="#L54" xlink:href="#L54" x="612" y="23"/><use href="#L45" xlink:href="#L45" x="620" y="23"/></g>
<g fill="#000"><use href="#L2f" xlink:href="#L2f" x="660" y="23"/><use href="#L44" xlink:href="#L44" x="668" y="23"/><use href="#L53" xlink:href="#L53" x="676" y="23"/><use href="#L50" xlink:href="#L50" x="684" y="23"/></g>
<g fill="#ff44cc"><use href="#L42" xlink:href="#L42" x="572" y="33"/><use href="#L3a" xlink:href="#L3a" x="580" y="33"/><use href="#L46" xlink:href="#L46" x="588" y="33"/><use href="#L49" xlink:href="#L49" x="596" y="33"/><use href="#L58" xlink:href="#L58" x="604" y="33"/></g>
<g fill="#ff44cc"><use href="#L2f" xlink:href="#L2f" x="660" y="33"/><use href="#L42" xlink:href="#L42" x="668" y="33"/><use href="#L4c" xlink:href="#L4c" x="676" y="33"/><use href="#L4b" xlink:href="#L4b" x="684" y="33"/></g>
<g fill="#00ee00"><use href="#L43" xlink:href="#L43" x="572" y="43"/><use href="#L3a" xlink:href="#L3a" x="580" y="43"/><use href="#L46" xlink:href="#L46" x="588" y="43"/><use href="#L49" xlink:href="#L49" x="596" y="43"/><use href="#L58" xlink:href="#L58" x="604" y="43"/></g>
<g fill="#00ee00"><use href="#L2f" xlink:href="#L2f" x="660" y="43"/><use href="#L42" xlink:href="#L42" x="668" y="43"/><use href="#L4c" xlink:href="#L4c" x="676" y="43"/><use href="#L4b" xlink:href="#L4b" x="684" y="43"/></g>
<g fill="#ee9999"><use href="#L44" xlink:href="#L44" x="572" y="53"/><use href="#L3a" xlink:href="#L3a" x="580" y="53"/><use href="#L46" xlink:href="#L46" x="588" y="53"/><use href="#L49" xlink:href="#L49" x="596" y="53"/><use href="#L58" xlink:href="#L58" x="604" y="53"/></g>
<g fill="#ee9999"><use href="#L2f" xlink:href="#L2f" x="660" y="53"/><use href="#L42" xlink:href="#L42" x="668" y="53"/><use href="#L4c" xlink:href="#L4c" x="676" y="53"/><use href="#L4b" xlink:href="#L4b" x="684" y="53"/></g>
<g fill="#6666ee"><use href="#L45" xlink:href="#L45" x="572" y="63"/><use href="#L3a" xlink:href="#L3a" x="580" y="63"/><use href="#L46" xlink:href="#L46" x="588" y="63"/><use href="#L49" xlink:href="#L49" x="596" y="63"/><use href="#L58" xlink:href="#L58" x="604" y="63"/></g>
<g fill="#6666ee"><use href="#L2f" xlink:href="#L2f" x="660" y="63"/><use href="#L42" xlink:href="#L42" x="668" y="63"/><use href="#L4c" xlink:href="#L4c" x="676" y="63"/><use href="#L4b" xlink:href="#L4b" x="684" y="63"/></g>
<g fill="#ff9900"><use href="#L46" xlink:href="#L46" x="572" y="73"/><use href="#L3a" xlink:href="#L3a" x="580" y="73"/><use href="#L46" xlink:href="#L46" x="588" y="73"/><use href="#L49" xlink:href="#L49" x="596" y="73"/><use href="#L58" xlink:href="#L58" x="604" y="73"/></g>
<g fill="#ff9900"><use href="#L2f" xlink:href="#L2f" x="660" y="73"/><use href="#L42" xlink:href="#L42" x="668" y="73"/><use href="#L4c" xlink:href="#L4c" x="676" y="73"/><use href="#L4b" xlink:href="#L4b" x="684" y="73"/></g>
<g fill="#dd99dd"><use href="#L47" xlink:href="#L47" x="572" y="83"/><use href="#L3a" xlink:href="#L3a" x="580" y="83"/><use href="#L46" xlink:href="#L46" x="588" y="83"/><use href="#L49" xlink:href="#L49" x="596" y="83"/><use href="#L58" xlink:href="#L58" x="604" y="83"/></g>
<g fill="#dd99dd"><use href="#L2f" xlink:href="#L2f" x="660" y="83"/><use href="#L42" xlink:href="#L42" x="668" y="83"/><use href="#L4c" xlink:href="#L4c" x="676" y="83"/><use href="#L4b" xlink:href="#L4b" x="684" y="83"/></g>
<rect x="2" y="96" width="648" height="26" fill="#fff" />
<rect x="2" y="96" width="647" height="25" fill="#000" />
<g fill="#fff"><use href="#L3c" xlink:href="#L3c" x="5" y="99"/><use href="#L4d" xlink:href="#L4d" x="13" y="99"/><use href="#L45" xlink:href="#L45" x="21" y="99"/><use href="#L41" xlink:href="#L41" x="29" y="99"/><use href="#L53" xlink:href="#L53" x="37" y="99"/><use href="#L43" xlink:href="#L43" x="53" y="99"/><use href="#L4f" xlink:href="#L4f" x="61" y="99"/><use href="#L4e" xlink:href="#L4e" x="69" y="99"/><use href="#L44" xlink:href="#L44" x="77" y="99"/><use href="#L49" xlink:href="#L49" x="85" y="99"/><use href="#L54" xlink:href="#L54" x="93" y="99"/><use href="#L49" xlink:href="#L49" x="101" y="99"/><use href="#L4f" xlink:href="#L4f" x="109" y="99"/><use href="#L4e" xlink:href="#L4e" x="117" y="99"/><use href="#L3e" xlink:href="#L3e" x="125" y="99"/></g>
<rect x="169.5" y="97.5" width="68" height="10" fill="none" stroke="#484848" stroke-width="1"/>
<g fill="#444444"><use href="#L32" xlink:href="#L32" x="172" y="99"/><use href="#L58" xlink:href="#L58" x="180" y="99"/><use href="#L53" xlink:href="#L53" x="196" y="99"/><use href="#L50" xlink:href="#L50" x="204" y="99"/><use href="#L45" xlink:href="#L45" x="212" y="99"/><use href="#L45" xlink:href="#L45" x="220" y="99"/><use href="#L44" xlink:href="#L44" x="228" y="99"/></g>
<g fill="#fff"><use href="#L53" xlink:href="#L53" x="5" y="113"/><use href="#L54" xlink:href="#L54" x="13" y="113"/><use href="#L41" xlink:href="#L41" x="21" y="113"/><use href="#L52" xlink:href="#L52" x="29" y="113"/><use href="#L54" xlink:href="#L54" x="37" y="113"/><use href="#L3a" xlink:href="#L3a" x="45" y="113"/></g>
<g fill="#ffff00"><use href="#N31" xlink:href="#N31" x="53" y="109"/><use href="#N39" xlink:href="#N39" x="61" y="109"/><use href="#N31" xlink:href="#N31" x="69" y="109"/><use href="#N35" xlink:href="#N35" x="77" y="109"/><use href="#N2e" xlink:href="#N2e" x="85" y="109"/><use href="#N30" xlink:href="#N30" x="93" y="109"/><use href="#N30" xlink:href="#N30" x="101" y="109"/><use href="#N30" xlink:href="#N30" x="109" y="109"/><use href="#N6e" xlink:href="#N6e" x="117" y="109"/><use href="#N6d" xlink:href="#N6d" x="125" y="109"/></g>
<g fill="#fff"><use href="#L53" xlink:href="#L53" x="173" y="113"/><use href="#L54" xlink:href="#L54" x="181" y="113"/><use href="#L4f" xlink:href="#L4f" x="189" y="113"/><use href="#L50" xlink:href="#L50" x="197" y="113"/><use href="#L3a" xlink:href="#L3a" x="205" y="113"/></g>
<g fill="#ffff00"><use href="#N31" xlink:href="#N31" x="213" y="109"/><use href="#N39" xlink:href="#N39" x="221" y="109"/><use href="#N36" xlink:href="#N36" x="229" y="109"/><use href="#N35" xlink:href="#N35" x="237" y="109"/><use href="#N2e" xlink:href="#N2e" x="245" y="109"/><use href="#N30" xlink:href="#N30" x="253" y="109"/><use href="#N30" xlink:href="#N30" x="261" y="109"/><use href="#N30" xlink:href="#N30" x="269" y="109"/><use href="#N6e" xlink:href="#N6e" x="277" y="109"/><use href="#N6d" xlink:href="#N6d" x="285" y="109"/></g>
<g fill="#fff"><use href="#L43" xlink:href="#L43" x="325" y="113"/><use href="#L45" xlink:href="#L45" x="333" y="113"/><use href="#L4e" xlink:href="#L4e" x="341" y="113"/><use href="#L54" xlink:href="#L54" x="349" y="113"/><use href="#L45" xlink:href="#L45" x="357" y="113"/><use href="#L52" xlink:href="#L52" x="365" y="113"/><use href="#L3a" xlink:href="#L3a" x="373" y="113"/></g>
<g fill="#ffff00"><use href="#N31" xlink:href="#N31" x="381" y="109"/><use href="#N39" xlink:href="#N39" x="389" y="109"/><use href="#N34" xlink:href="#N34" x="397" y="109"/><use href="#N30" xlink:href="#N30" x="405" y="109"/><use href="#N2e" xlink:href="#N2e" x="413" y="109"/><use href="#N30" xlink:href="#N30" x="421" y="109"/><use href="#N30" xlink:href="#N30" x="429" y="109"/><use href="#N30" xlink:href="#N30" x="437" y="109"/><use href="#N6e" xlink:href="#N6e" x="445" y="109"/><use href="#N6d" xlink:href="#N6d" x="453" y="109"/></g>
<g fill="#fff"><use href="#L53" xlink:href="#L53" x="493" y="113"/><use href="#L50" xlink:href="#L50" x="501" y="113"/><use href="#L41" xlink:href="#L41" x="509" y="113"/><use href="#L4e" xlink:href="#L4e" x="517" y="113"/><use href="#L3a" xlink:href="#L3a" x="525" y="113"/></g>
<g fill="#ffff00"><use href="#N35" xlink:href="#N35" x="549" y="109"/><use href="#N30" xlink:href="#N30" x="557" y="109"/><use href="#N2e" xlink:href="#N2e" x="565" y="109"/><use href="#N30" xlink:href="#N30" x="573" y="109"/><use href="#N6e" xlink:href="#N6e" x="581" y="109"/><use href="#N6d" xlink:href="#N6d" x="589" y="109"/></g>
<rect x="45" y="131" width="37" height="16" fill="#0c0c38" />
<rect x="45" y="131" width="36" height="15" fill="#000" />
<rect x="46" y="132" width="34" height="13" fill="#fff" />
<g fill="#000"><use href="#N31" xlink:href="#N31" x="47" y="133"/><use href="#N30" xlink:href="#N30" x="55" y="133"/><use href="#N2e" xlink:href="#N2e" x="63" y="133"/><use href="#N30" xlink:href="#N30" x="71" y="133"/></g>
<g fill="#fff"><use href="#L64" xlink:href="#L64" x="84" y="137"/><use href="#L42" xlink:href="#L42" x="92" y="137"/><use href="#L2f" xlink:href="#L2f" x="100" y="137"/><use href="#L44" xlink:href="#L44" x="108" y="137"/></g>
<g fill="#fff"><use href="#L52" xlink:href="#L52" x="180" y="137"/><use href="#L45" xlink:href="#L45" x="188" y="137"/><use href="#L53" xlink:href="#L53" x="196" y="137"/><use href="#L3a" xlink:href="#L3a" x="204" y="137"/></g>
<rect x="212" y="131" width="45" height="16" fill="#0c0c38" />
<rect x="212" y="131" width="44" height="15" fill="#000" />
<rect x="213" y="132" width="42" height="13" fill="#fff" />
<g fill="#000"><use href="#N30" xlink:href="#N30" x="223" y="133"/><use href="#N2e" xlink:href="#N2e" x="231" y="133"/><use href="#N30" xlink:href="#N30" x="239" y="133"/><use href="#N35" xlink:href="#N35" x="247" y="133"/></g>
<g fill="#fff"><use href="#L6e" xlink:href="#L6e" x="259" y="136"/><use href="#L6d" xlink:href="#L6d" x="267" y="136"/></g>
<g fill="#fff"><use href="#L53" xlink:href="#L53" x="293" y="137"/><use href="#L45" xlink:href="#L45" x="301" y="137"/><use href="#L4e" xlink:href="#L4e" x="309" y="137"/><use href="#L53" xlink:href="#L53" x="317" y="137"/><use href="#L3a" xlink:href="#L3a" x="325" y="137"/></g>
<rect x="333" y="131" width="85" height="16" fill="#0c0c38" />
<rect x="333" y="131" width="84" height="15" fill="#000" />
<rect x="334" y="132" width="82" height="13" fill="#fff" />
<g fill="#000"><use href="#N4d" xlink:href="#N4d" x="336" y="133"/><use href="#N49" xlink:href="#N49" x="344" y="133"/><use href="#N44" xlink:href="#N44" x="352" y="133"/></g>
<g fill="#fff"><use href="#L41" xlink:href="#L41" x="437" y="137"/><use href="#L56" xlink:href="#L56" x="445" y="137"/><use href="#L47" xlink:href="#L47" x="453" y="137"/><use href="#L3a" xlink:href="#L3a" x="461" y="137"/></g>
<rect x="469" y="131" width="29" height="16" fill="#0c0c38" />
<rect x="469" y="131" width="28" height="15" fill="#000" />
<rect x="470" y="132" width="26" height="13" fill="#fff" />
<g fill="#000"><use href="#N31" xlink:href="#N31" x="488" y="133"/></g>
<g fill="#fff"><use href="#L53" xlink:href="#L53" x="516" y="137"/><use href="#L4d" xlink:href="#L4d" x="524" y="137"/><use href="#L50" xlink:href="#L50" x="532" y="137"/><use href="#L4c" xlink:href="#L4c" x="540" y="137"/><use href="#L3a" xlink:href="#L3a" x="548" y="137"/></g>
<rect x="557" y="131" width="93" height="16" fill="#0c0c38" />
<rect x="557" y="131" width="92" height="15" fill="#000" />
<rect x="558" y="132" width="90" height="13" fill="#fff" />
<g fill="#000"><use href="#N35" xlink:href="#N35" x="568" y="133"/><use href="#N30" xlink:href="#N30" x="576" y="133"/><use href="#N30" xlink:href="#N30" x="584" y="133"/><use href="#N31" xlink:href="#N31" x="592" y="133"/><use href="#N28" xlink:href="#N28" x="600" y="133"/><use href="#N41" xlink:href="#N41" x="608" y="133"/><use href="#N55" xlink:href="#N55" x="616" y="133"/><use href="#N54" xlink:href="#N54" x="624" y="133"/><use href="#N4f" xlink:href="#N4f" x="632" y="133"/><use href="#N29" xlink:href="#N29" x="640" y="133"/></g>
<rect x="45" y="148" width="605" height="405" fill="#fff" />
<rect x="45" y="148" width="603" height="403" fill="#0c0c38" />
<rect x="47" y="150" width="601" height="401" fill="#000" />
<rect x="45" y="551" width="605" height="2" fill="#fff" />
<rect x="45" y="551" width="24" height="5" fill="#fff" />
<rect x="47" y="553" width="22" height="2" fill="#0c0c38" />
<g shape-rendering="crispEdges"><path d="M107.5 150 V551 M167.5 150 V551 M227.5 150 V551 M287.5 150 V551 M347.5 150 V551 M407.5 150 V551 M467.5 150 V551 M527.5 150 V551 M587.5 150 V551" stroke="#8e8e8e" stroke-width="1" stroke-dasharray="3 3" stroke-dashoffset="0"/>
<path d="M47 190.5 H648 M47 230.5 H648 M47 270.5 H648 M47 310.5 H648 M47 350.5 H648 M47 390.5 H648 M47 430.5 H648 M47 470.5 H648 M47 510.5 H648" stroke="#8e8e8e" stroke-width="1" stroke-dasharray="3 3" stroke-dashoffset="-2"/></g>
<path d="M47.5 444 V495 M48.5 452 V551 M49.5 449 V551 M50.5 452 V551 M51.5 448 V551 M52.5 453 V551 M53.5 454 V551 M54.5 452 V475 M55.5 455 V551 M56.5 461 V551 M57.5 460 V551 M58.5 457 V551 M59.5 466 V551 M60.5 455 V551 M61.5 449 V551 M62.5 456 V551 M63.5 453 V551 M64.5 457 V551 M65.5 466 V551 M66.5 452 V551 M67.5 455 V551 M68.5 446 V461 M69.5 451 V551 M70.5 454 V551 M71.5 451 V551 M72.5 453 V551 M73.5 457 V551 M74.5 459 V551 M75.5 454 V551 M76.5 454 V551 M77.5 452 V551 M78.5 451 V551 M79.5 452 V551 M80.5 455 V551 M81.5 454 V551 M82.5 454 V551 M83.5 450 V551 M84.5 443 V551 M85.5 454 V551 M86.5 456 V551 M87.5 452 V551 M88.5 462 V551 M89.5 451 V551 M90.5 454 V551 M91.5 460 V551 M92.5 466 V490 M93.5 455 V481 M94.5 457 V551 M95.5 445 V551 M96.5 450 V551 M97.5 452 V551 M98.5 453 V551 M99.5 454 V551 M100.5 454 V551 M101.5 453 V551 M102.5 453 V551 M103.5 454 V551 M104.5 455 V551 M105.5 450 V551 M106.5 448 V551 M107.5 452 V551 M108.5 454 V551 M109.5 444 V551 M110.5 462 V551 M111.5 453 V551 M112.5 448 V551 M113.5 453 V551 M114.5 458 V551 M115.5 457 V551 M116.5 458 V551 M117.5 454 V551 M118.5 459 V490 M119.5 449 V551 M120.5 451 V551 M121.5 452 V551 M122.5 455 V551 M123.5 451 V551 M124.5 457 V551 M125.5 450 V551 M126.5 455 V551 M127.5 455 V551 M128.5 448 V551 M129.5 452 V551 M130.5 452 V551 M131.5 452 V551 M132.5 450 V551 M133.5 449 V498 M134.5 456 V551 M135.5 454 V551 M136.5 455 V551 M137.5 454 V551 M138.5 455 V551 M139.5 452 V551 M140.5 451 V551 M141.5 447 V551 M142.5 448 V551 M143.5 449 V551 M144.5 448 V551 M145.5 451 V551 M146.5 456 V551 M147.5 452 V551 M148.5 453 V551 M149.5 443 V551 M150.5 451 V551 M151.5 452 V551 M152.5 448 V551 M153.5 457 V551 M154.5 449 V551 M155.5 456 V551 M156.5 448 V551 M157.5 451 V551 M158.5 449 V551 M159.5 452 V551 M160.5 441 V551 M161.5 449 V551 M162.5 454 V497 M163.5 451 V551 M164.5 458 V551 M165.5 447 V551 M166.5 451 V551 M167.5 466 V551 M168.5 455 V469 M169.5 458 V551 M170.5 456 V551 M171.5 449 V551 M172.5 461 V551 M173.5 449 V551 M174.5 449 V551 M175.5 451 V551 M176.5 461 V551 M177.5 452 V551 M178.5 452 V551 M179.5 460 V551 M180.5 453 V551 M181.5 454 V551 M182.5 452 V551 M183.5 454 V551 M184.5 454 V551 M185.5 453 V551 M186.5 444 V551 M187.5 451 V551 M188.5 455 V551 M189.5 452 V551 M190.5 443 V551 M191.5 444 V551 M192.5 451 V551 M193.5 450 V551 M194.5 448 V505 M195.5 448 V551 M196.5 452 V551 M197.5 449 V551 M198.5 453 V551 M199.5 448 V551 M200.5 453 V489 M201.5 450 V551 M202.5 452 V551 M203.5 450 V551 M204.5 459 V551 M205.5 450 V551 M206.5 453 V551 M207.5 455 V551 M208.5 453 V551 M209.5 456 V551 M210.5 453 V551 M211.5 448 V551 M212.5 451 V551 M213.5 453 V551 M214.5 450 V495 M215.5 451 V551 M216.5 443 V551 M217.5 452 V551 M218.5 453 V551 M219.5 446 V551 M220.5 464 V551 M221.5 449 V551 M222.5 446 V498 M223.5 452 V551 M224.5 448 V551 M225.5 453 V551 M226.5 458 V551 M227.5 457 V551 M228.5 456 V551 M229.5 452 V551 M230.5 457 V551 M231.5 452 V551 M232.5 452 V551 M233.5 447 V551 M234.5 455 V551 M235.5 449 V551 M236.5 449 V551 M237.5 448 V551 M238.5 451 V480 M239.5 452 V551 M240.5 453 V551 M241.5 450 V551 M242.5 453 V551 M243.5 444 V551 M244.5 451 V551 M245.5 457 V478 M246.5 443 V551 M247.5 450 V551 M248.5 455 V551 M249.5 454 V551 M250.5 458 V551 M251.5 455 V551 M252.5 453 V551 M253.5 452 V551 M254.5 454 V551 M255.5 454 V551 M256.5 453 V494 M257.5 463 V551 M258.5 453 V551 M259.5 441 V551 M260.5 453 V487 M261.5 454 V551 M262.5 457 V551 M263.5 457 V551 M264.5 454 V551 M265.5 448 V551 M266.5 460 V551 M267.5 458 V551 M268.5 455 V551 M269.5 457 V551 M270.5 454 V551 M271.5 455 V551 M272.5 449 V551 M273.5 448 V551 M274.5 440 V551 M275.5 450 V551 M276.5 446 V551 M277.5 453 V551 M278.5 451 V551 M279.5 455 V551 M280.5 448 V551 M281.5 449 V551 M282.5 451 V551 M283.5 448 V551 M284.5 455 V551 M285.5 455 V551 M286.5 448 V551 M287.5 455 V551 M288.5 451 V551 M289.5 445 V551 M290.5 452 V551 M291.5 456 V551 M292.5 457 V551 M293.5 450 V551 M294.5 452 V551 M295.5 449 V551 M296.5 452 V551 M297.5 451 V551 M298.5 453 V551 M299.5 454 V551 M300.5 456 V551 M301.5 453 V551 M302.5 454 V551 M303.5 453 V551 M304.5 453 V551 M305.5 459 V551 M306.5 456 V551 M307.5 453 V551 M308.5 456 V551 M309.5 450 V551 M310.5 468 V551 M311.5 453 V551 M312.5 459 V551 M313.5 449 V551 M314.5 452 V490 M315.5 453 V551 M316.5 453 V551 M317.5 457 V551 M318.5 453 V500 M319.5 445 V551 M320.5 450 V551 M321.5 452 V551 M322.5 456 V551 M323.5 456 V551 M324.5 443 V551 M325.5 454 V551 M326.5 451 V551 M327.5 451 V551 M328.5 446 V551 M329.5 451 V551 M330.5 453 V551 M331.5 447 V551 M332.5 446 V551 M333.5 452 V551 M334.5 463 V551 M335.5 450 V551 M336.5 451 V520 M337.5 451 V551 M338.5 451 V551 M339.5 452 V551 M340.5 451 V551 M341.5 449 V551 M342.5 456 V551 M354.5 454 V551 M355.5 453 V551 M356.5 453 V479 M357.5 445 V551 M358.5 451 V551 M359.5 450 V465 M360.5 447 V551 M361.5 453 V551 M362.5 459 V551 M363.5 451 V551 M364.5 454 V551 M365.5 453 V551 M366.5 467 V551 M367.5 457 V551 M368.5 457 V551 M369.5 455 V489 M370.5 455 V551 M371.5 450 V551 M372.5 448 V551 M373.5 455 V551 M374.5 453 V551 M375.5 451 V551 M376.5 451 V551 M377.5 453 V551 M378.5 463 V551 M379.5 450 V551 M380.5 450 V551 M381.5 453 V551 M382.5 465 V551 M383.5 455 V551 M384.5 457 V551 M385.5 457 V551 M386.5 446 V551 M387.5 456 V551 M388.5 455 V551 M389.5 460 V551 M390.5 451 V551 M391.5 454 V551 M392.5 451 V551 M393.5 450 V551 M394.5 452 V551 M395.5 452 V551 M396.5 448 V551 M397.5 461 V551 M398.5 444 V551 M399.5 453 V551 M400.5 456 V551 M401.5 456 V551 M402.5 455 V494 M403.5 461 V551 M404.5 452 V551 M405.5 451 V551 M406.5 459 V551 M407.5 451 V551 M408.5 453 V551 M409.5 453 V551 M410.5 453 V551 M411.5 447 V551 M412.5 448 V551 M413.5 446 V551 M414.5 459 V551 M415.5 453 V551 M416.5 450 V551 M417.5 453 V551 M418.5 451 V551 M419.5 443 V551 M420.5 453 V551 M421.5 454 V551 M422.5 451 V551 M423.5 454 V551 M424.5 463 V551 M425.5 448 V551 M426.5 446 V551 M427.5 453 V551 M428.5 453 V551 M429.5 448 V551 M430.5 456 V551 M431.5 465 V480 M432.5 459 V551 M433.5 458 V551 M434.5 455 V551 M435.5 457 V551 M436.5 455 V551 M437.5 454 V551 M438.5 454 V551 M439.5 452 V551 M440.5 452 V551 M441.5 450 V551 M442.5 452 V551 M443.5 451 V551 M444.5 448 V490 M445.5 453 V551 M446.5 455 V551 M447.5 452 V551 M448.5 451 V551 M449.5 453 V551 M450.5 452 V551 M451.5 452 V551 M452.5 455 V551 M453.5 460 V551 M454.5 464 V551 M455.5 456 V551 M456.5 465 V551 M457.5 450 V551 M458.5 453 V551 M459.5 451 V551 M460.5 447 V551 M461.5 451 V551 M462.5 451 V551 M463.5 452 V551 M464.5 450 V472 M465.5 453 V551 M466.5 450 V551 M467.5 452 V551 M468.5 452 V551 M469.5 455 V551 M470.5 454 V551 M471.5 460 V551 M472.5 453 V551 M473.5 452 V475 M474.5 461 V475 M475.5 452 V551 M476.5 453 V480 M477.5 452 V551 M478.5 452 V517 M479.5 452 V551 M480.5 451 V551 M481.5 453 V551 M482.5 455 V551 M483.5 456 V551 M484.5 450 V551 M485.5 453 V551 M486.5 455 V551 M487.5 453 V522 M488.5 451 V551 M489.5 450 V551 M490.5 449 V551 M491.5 447 V551 M492.5 451 V551 M493.5 451 V551 M494.5 464 V481 M495.5 454 V551 M496.5 453 V551 M497.5 450 V485 M498.5 451 V495 M499.5 454 V481 M500.5 444 V551 M501.5 449 V551 M502.5 451 V483 M503.5 447 V551 M504.5 452 V551 M505.5 453 V551 M506.5 456 V551 M507.5 455 V551 M508.5 458 V551 M509.5 453 V505 M510.5 450 V474 M511.5 451 V551 M512.5 450 V551 M513.5 446 V551 M514.5 441 V551 M515.5 452 V493 M516.5 466 V483 M517.5 455 V551 M518.5 463 V551 M519.5 457 V551 M520.5 455 V551 M521.5 451 V551 M522.5 449 V551 M523.5 453 V551 M524.5 453 V551 M525.5 455 V551 M526.5 445 V551 M527.5 451 V475 M528.5 449 V551 M529.5 455 V551 M530.5 448 V551 M531.5 451 V551 M532.5 456 V551 M533.5 449 V490 M534.5 455 V551 M535.5 451 V551 M536.5 452 V551 M537.5 450 V551 M538.5 452 V551 M539.5 452 V481 M540.5 454 V501 M541.5 455 V551 M542.5 453 V517 M543.5 453 V551 M544.5 458 V551 M545.5 448 V551 M546.5 453 V551 M547.5 451 V551 M548.5 451 V551 M549.5 448 V551 M550.5 447 V551 M551.5 455 V551 M552.5 453 V551 M553.5 466 V551 M554.5 443 V551 M555.5 453 V551 M556.5 443 V551 M557.5 456 V551 M558.5 453 V551 M559.5 453 V505 M560.5 458 V505 M561.5 454 V497 M562.5 456 V551 M563.5 458 V551 M564.5 443 V497 M565.5 455 V551 M566.5 450 V551 M567.5 454 V551 M568.5 452 V551 M569.5 458 V551 M570.5 455 V551 M571.5 455 V551 M572.5 452 V535 M573.5 453 V551 M574.5 454 V551 M575.5 455 V551 M576.5 453 V514 M577.5 455 V551 M578.5 444 V551 M579.5 443 V503 M580.5 452 V551 M581.5 449 V551 M582.5 458 V551 M583.5 446 V551 M584.5 456 V551 M585.5 450 V551 M586.5 452 V551 M587.5 468 V551 M588.5 454 V551 M589.5 463 V551 M590.5 454 V551 M591.5 457 V551 M592.5 452 V551 M593.5 454 V551 M594.5 455 V551 M595.5 452 V477 M596.5 451 V490 M597.5 451 V551 M598.5 459 V551 M599.5 455 V551 M600.5 449 V551 M601.5 454 V551 M602.5 452 V495 M603.5 455 V479 M604.5 453 V551 M605.5 461 V551 M606.5 453 V470 M607.5 452 V551 M608.5 453 V551 M609.5 452 V551 M610.5 450 V551 M611.5 450 V551 M612.5 450 V551 M613.5 457 V551 M614.5 449 V551 M615.5 447 V551 M616.5 448 V551 M617.5 449 V551 M618.5 454 V551 M619.5 446 V551 M620.5 448 V551 M621.5 450 V551 M622.5 455 V551 M623.5 456 V551 M624.5 451 V551 M625.5 450 V551 M626.5 445 V551 M627.5 452 V551 M628.5 446 V551 M629.5 462 V551 M630.5 447 V551 M631.5 453 V551 M632.5 459 V551 M633.5 450 V551 M634.5 460 V551 M635.5 452 V551 M636.5 456 V477 M637.5 453 V523 M638.5 453 V551 M639.5 452 V491 M640.5 459 V551 M641.5 452 V551 M642.5 450 V551 M643.5 450 V551 M644.5 451 V551 M645.5 455 V551 M646.5 452 V551 M647.5 451 V551" stroke="#ffff00" stroke-width="1"/>
<rect x="348" y="236" width="2" height="42" fill="#ffff00" />
<rect x="348" y="278" width="1" height="12" fill="#ffff00" />
<rect x="347" y="290" width="1" height="60" fill="#ffff00" />
<rect x="346" y="350" width="1" height="47" fill="#ffff00" />
<rect x="345" y="397" width="1" height="28" fill="#ffff00" />
<rect x="344" y="425" width="1" height="15" fill="#ffff00" />
<rect x="343" y="440" width="1" height="32" fill="#ffff00" />
<rect x="342" y="472" width="1" height="79" fill="#ffff00" />
<rect x="350" y="278" width="1" height="72" fill="#ffff00" />
<rect x="351" y="350" width="1" height="53" fill="#ffff00" />
<rect x="352" y="403" width="1" height="29" fill="#ffff00" />
<rect x="353" y="432" width="1" height="119" fill="#ffff00" />
<path d="M345 228h7v2h-1v2h-1v2h-1v2h-1v-2h-1v-2h-1v-2h-1z" fill="#ff0000"/>
<g fill="#ff0000"><use href="#M30" xlink:href="#M30" x="343" y="220"/><use href="#M30" xlink:href="#M30" x="347" y="220"/><use href="#M31" xlink:href="#M31" x="351" y="220"/></g>
<rect x="104" y="442" width="7" height="1" fill="#ff0000" />
<rect x="104" y="443" width="1" height="1" fill="#ff0000" />
<rect x="110" y="443" width="1" height="1" fill="#ff0000" />
<rect x="105" y="444" width="1" height="2" fill="#ff0000" />
<rect x="109" y="444" width="1" height="2" fill="#ff0000" />
<rect x="106" y="446" width="1" height="2" fill="#ff0000" />
<rect x="108" y="446" width="1" height="2" fill="#ff0000" />
<rect x="107" y="448" width="1" height="2" fill="#ff0000" />
<g fill="#ff0000"><use href="#M30" xlink:href="#M30" x="102" y="434"/><use href="#M30" xlink:href="#M30" x="106" y="434"/><use href="#M32" xlink:href="#M32" x="110" y="434"/></g>
<rect x="47" y="226" width="25" height="9" fill="#000" />
<g fill="#fff"><use href="#L52" xlink:href="#L52" x="48" y="227"/><use href="#L45" xlink:href="#L45" x="56" y="227"/><use href="#L46" xlink:href="#L46" x="64" y="227"/></g>
<g fill="#fff"><use href="#A33" xlink:href="#A33" x="25" y="145"/><use href="#A2e" xlink:href="#A2e" x="31" y="145"/><use href="#A31" xlink:href="#A31" x="37" y="145"/></g>
<g fill="#fff"><use href="#A2d" xlink:href="#A2d" x="13" y="305"/><use href="#A33" xlink:href="#A33" x="19" y="305"/><use href="#A36" xlink:href="#A36" x="25" y="305"/><use href="#A2e" xlink:href="#A2e" x="31" y="305"/><use href="#A39" xlink:href="#A39" x="37" y="305"/></g>
<g fill="#fff"><use href="#A2d" xlink:href="#A2d" x="13" y="385"/><use href="#A35" xlink:href="#A35" x="19" y="385"/><use href="#A36" xlink:href="#A36" x="25" y="385"/><use href="#A2e" xlink:href="#A2e" x="31" y="385"/><use href="#A39" xlink:href="#A39" x="37" y="385"/></g>
<g fill="#fff"><use href="#A2d" xlink:href="#A2d" x="13" y="465"/><use href="#A37" xlink:href="#A37" x="19" y="465"/><use href="#A36" xlink:href="#A36" x="25" y="465"/><use href="#A2e" xlink:href="#A2e" x="31" y="465"/><use href="#A39" xlink:href="#A39" x="37" y="465"/></g>
<g fill="#fff"><use href="#A2d" xlink:href="#A2d" x="13" y="547"/><use href="#A39" xlink:href="#A39" x="19" y="547"/><use href="#A36" xlink:href="#A36" x="25" y="547"/><use href="#A2e" xlink:href="#A2e" x="31" y="547"/><use href="#A39" xlink:href="#A39" x="37" y="547"/></g>
<rect x="2" y="223" width="41" height="16" fill="#0c0c38" />
<rect x="2" y="223" width="40" height="15" fill="#000" />
<rect x="3" y="224" width="38" height="13" fill="#fff" />
<g fill="#000"><use href="#A2d" xlink:href="#A2d" x="10" y="225"/><use href="#A31" xlink:href="#A31" x="16" y="225"/><use href="#A36" xlink:href="#A36" x="22" y="225"/><use href="#A2e" xlink:href="#A2e" x="28" y="225"/><use href="#A39" xlink:href="#A39" x="34" y="225"/></g>
<g fill="#fff"><use href="#L64" xlink:href="#L64" x="19" y="240"/><use href="#L42" xlink:href="#L42" x="27" y="240"/><use href="#L6d" xlink:href="#L6d" x="35" y="240"/></g>
<rect x="7" y="559" width="77" height="16" fill="#0c0c38" />
<rect x="7" y="559" width="76" height="15" fill="#000" />
<rect x="8" y="560" width="74" height="13" fill="#fff" />
<g fill="#000"><use href="#N31" xlink:href="#N31" x="18" y="561"/><use href="#N39" xlink:href="#N39" x="26" y="561"/><use href="#N31" xlink:href="#N31" x="34" y="561"/><use href="#N35" xlink:href="#N35" x="42" y="561"/><use href="#N2e" xlink:href="#N2e" x="50" y="561"/><use href="#N30" xlink:href="#N30" x="58" y="561"/><use href="#N30" xlink:href="#N30" x="66" y="561"/><use href="#N30" xlink:href="#N30" x="74" y="561"/></g>
<g fill="#fff"><use href="#L6e" xlink:href="#L6e" x="86" y="564"/><use href="#L6d" xlink:href="#L6d" x="94" y="564"/></g>
<rect x="310" y="559" width="77" height="16" fill="#0c0c38" />
<rect x="310" y="559" width="76" height="15" fill="#000" />
<rect x="311" y="560" width="74" height="13" fill="#fff" />
<g fill="#000"><use href="#N31" xlink:href="#N31" x="321" y="561"/><use href="#N39" xlink:href="#N39" x="329" y="561"/><use href="#N34" xlink:href="#N34" x="337" y="561"/><use href="#N30" xlink:href="#N30" x="345" y="561"/><use href="#N2e" xlink:href="#N2e" x="353" y="561"/><use href="#N30" xlink:href="#N30" x="361" y="561"/><use href="#N30" xlink:href="#N30" x="369" y="561"/><use href="#N30" xlink:href="#N30" x="377" y="561"/></g>
<g fill="#fff"><use href="#L6e" xlink:href="#L6e" x="389" y="564"/><use href="#L6d" xlink:href="#L6d" x="397" y="564"/></g>
<rect x="460" y="559" width="53" height="16" fill="#0c0c38" />
<rect x="460" y="559" width="52" height="15" fill="#000" />
<rect x="461" y="560" width="50" height="13" fill="#fff" />
<g fill="#000"><use href="#N35" xlink:href="#N35" x="479" y="561"/><use href="#N2e" xlink:href="#N2e" x="487" y="561"/><use href="#N30" xlink:href="#N30" x="495" y="561"/><use href="#N30" xlink:href="#N30" x="503" y="561"/></g>
<g fill="#fff"><use href="#L6e" xlink:href="#L6e" x="515" y="564"/><use href="#L6d" xlink:href="#L6d" x="523" y="564"/><use href="#L2f" xlink:href="#L2f" x="531" y="564"/><use href="#L44" xlink:href="#L44" x="539" y="564"/></g>
<rect x="596" y="559" width="77" height="16" fill="#0c0c38" />
<rect x="596" y="559" width="76" height="15" fill="#000" />
<rect x="597" y="560" width="74" height="13" fill="#fff" />
<g fill="#000"><use href="#N31" xlink:href="#N31" x="607" y="561"/><use href="#N39" xlink:href="#N39" x="615" y="561"/><use href="#N36" xlink:href="#N36" x="623" y="561"/><use href="#N35" xlink:href="#N35" x="631" y="561"/><use href="#N2e" xlink:href="#N2e" x="639" y="561"/><use href="#N30" xlink:href="#N30" x="647" y="561"/><use href="#N30" xlink:href="#N30" x="655" y="561"/><use href="#N30" xlink:href="#N30" x="663" y="561"/></g>
<g fill="#fff"><use href="#L6e" xlink:href="#L6e" x="675" y="564"/><use href="#L6d" xlink:href="#L6d" x="683" y="564"/></g>
<g fill="#fff"><use href="#L2044" xlink:href="#L2044" x="5" y="589"/></g>
<g fill="#fff"><use href="#L33" xlink:href="#L33" x="16" y="589"/><use href="#L25" xlink:href="#L25" x="24" y="589"/></g>
<rect x="147" y="578" width="28" height="21" fill="#1a1a4a" />
<rect x="147" y="578" width="27" height="20" fill="#fff" />
<rect x="148" y="579" width="26" height="19" fill="#6868d0" />
<g fill="#000"><use href="#L4c" xlink:href="#L4c" x="149" y="581"/><use href="#L56" xlink:href="#L56" x="157" y="581"/><use href="#L4c" xlink:href="#L4c" x="165" y="581"/></g>
<g fill="#000"><use href="#L53" xlink:href="#L53" x="149" y="589"/><use href="#L48" xlink:href="#L48" x="157" y="589"/><use href="#L46" xlink:href="#L46" x="165" y="589"/></g>
<rect x="178" y="578" width="28" height="21" fill="#1a1a4a" />
<rect x="178" y="578" width="27" height="20" fill="#fff" />
<rect x="179" y="579" width="26" height="19" fill="#6868d0" />
<g fill="#000"><use href="#L57" xlink:href="#L57" x="180" y="581"/><use href="#L4c" xlink:href="#L4c" x="188" y="581"/></g>
<g fill="#000"><use href="#L53" xlink:href="#L53" x="180" y="589"/><use href="#L48" xlink:href="#L48" x="188" y="589"/><use href="#L46" xlink:href="#L46" x="196" y="589"/></g>
<rect x="209" y="578" width="28" height="21" fill="#1a1a4a" />
<rect x="209" y="578" width="27" height="20" fill="#fff" />
<rect x="210" y="579" width="26" height="19" fill="#6868d0" />
<g fill="#000"><use href="#L4e" xlink:href="#L4e" x="211" y="581"/><use href="#L4f" xlink:href="#L4f" x="219" y="581"/><use href="#L49" xlink:href="#L49" x="227" y="581"/></g>
<g fill="#000"><use href="#L4d" xlink:href="#L4d" x="211" y="589"/><use href="#L53" xlink:href="#L53" x="219" y="589"/><use href="#L4b" xlink:href="#L4b" x="227" y="589"/></g>
<rect x="240" y="578" width="28" height="21" fill="#fff" />
<rect x="240" y="578" width="27" height="20" fill="#000033" />
<g fill="#fff"><use href="#L53" xlink:href="#L53" x="242" y="581"/><use href="#L52" xlink:href="#L52" x="250" y="581"/><use href="#L43" xlink:href="#L43" x="258" y="581"/></g>
<g fill="#fff"><use href="#L5a" xlink:href="#L5a" x="242" y="589"/><use href="#L4f" xlink:href="#L4f" x="250" y="589"/><use href="#L4d" xlink:href="#L4d" x="258" y="589"/></g>
<rect x="271" y="578" width="28" height="21" fill="#1a1a4a" />
<rect x="271" y="578" width="27" height="20" fill="#fff" />
<rect x="272" y="579" width="26" height="19" fill="#6868d0" />
<g fill="#000"><use href="#L53" xlink:href="#L53" x="273" y="581"/><use href="#L52" xlink:href="#L52" x="281" y="581"/><use href="#L43" xlink:href="#L43" x="289" y="581"/></g>
<g fill="#000"><use href="#L31" xlink:href="#L31" x="273" y="589"/><use href="#L2d" xlink:href="#L2d" x="281" y="589"/><use href="#L32" xlink:href="#L32" x="289" y="589"/></g>
<rect x="302" y="578" width="28" height="21" fill="#fff" />
<rect x="302" y="578" width="27" height="20" fill="#000033" />
<g fill="#fff"><use href="#L56" xlink:href="#L56" x="304" y="581"/><use href="#L41" xlink:href="#L41" x="312" y="581"/><use href="#L43" xlink:href="#L43" x="320" y="581"/></g>
<g fill="#fff"><use href="#L57" xlink:href="#L57" x="304" y="589"/><use href="#L4c" xlink:href="#L4c" x="312" y="589"/></g>
<rect x="333" y="578" width="28" height="21" fill="#fff" />
<rect x="333" y="578" width="27" height="20" fill="#000033" />
<g fill="#fff"><use href="#L41" xlink:href="#L41" x="335" y="581"/><use href="#L55" xlink:href="#L55" x="343" y="581"/><use href="#L54" xlink:href="#L54" x="351" y="581"/></g>
<g fill="#fff"><use href="#L4f" xlink:href="#L4f" x="335" y="589"/><use href="#L46" xlink:href="#L46" x="343" y="589"/><use href="#L53" xlink:href="#L53" x="351" y="589"/></g>
<rect x="364" y="578" width="28" height="21" fill="#1a1a4a" />
<rect x="364" y="578" width="27" height="20" fill="#fff" />
<rect x="365" y="579" width="26" height="19" fill="#6868d0" />
<g fill="#000"><use href="#L41" xlink:href="#L41" x="366" y="581"/><use href="#L55" xlink:href="#L55" x="374" y="581"/><use href="#L54" xlink:href="#L54" x="382" y="581"/></g>
<g fill="#000"><use href="#L41" xlink:href="#L41" x="366" y="589"/><use href="#L4e" xlink:href="#L4e" x="374" y="589"/><use href="#L41" xlink:href="#L41" x="382" y="589"/></g>
<rect x="395" y="578" width="28" height="21" fill="#1a1a4a" />
<rect x="395" y="578" width="27" height="20" fill="#fff" />
<rect x="396" y="579" width="26" height="19" fill="#6868d0" />
<g fill="#000"><use href="#L41" xlink:href="#L41" x="397" y="581"/><use href="#L55" xlink:href="#L55" x="405" y="581"/><use href="#L54" xlink:href="#L54" x="413" y="581"/></g>
<g fill="#000"><use href="#L53" xlink:href="#L53" x="397" y="589"/><use href="#L52" xlink:href="#L52" x="405" y="589"/><use href="#L43" xlink:href="#L43" x="413" y="589"/></g>
<rect x="426" y="578" width="28" height="21" fill="#1a1a4a" />
<rect x="426" y="578" width="27" height="20" fill="#fff" />
<rect x="427" y="579" width="26" height="19" fill="#6868d0" />
<g fill="#000"><use href="#L41" xlink:href="#L41" x="428" y="581"/><use href="#L55" xlink:href="#L55" x="436" y="581"/><use href="#L54" xlink:href="#L54" x="444" y="581"/></g>
<g fill="#000"><use href="#L53" xlink:href="#L53" x="428" y="589"/><use href="#L43" xlink:href="#L43" x="436" y="589"/><use href="#L4c" xlink:href="#L4c" x="444" y="589"/></g>
<rect x="457" y="578" width="28" height="21" fill="#1a1a4a" />
<rect x="457" y="578" width="27" height="20" fill="#fff" />
<rect x="458" y="579" width="26" height="19" fill="#6868d0" />
<g fill="#000"><use href="#L41" xlink:href="#L41" x="459" y="581"/><use href="#L55" xlink:href="#L55" x="467" y="581"/><use href="#L54" xlink:href="#L54" x="475" y="581"/></g>
<g fill="#000"><use href="#L52" xlink:href="#L52" x="459" y="589"/><use href="#L45" xlink:href="#L45" x="467" y="589"/><use href="#L46" xlink:href="#L46" x="475" y="589"/></g>
<rect x="488" y="578" width="28" height="21" fill="#1a1a4a" />
<rect x="488" y="578" width="27" height="20" fill="#fff" />
<rect x="489" y="579" width="26" height="19" fill="#6868d0" />
<g fill="#000"><use href="#L41" xlink:href="#L41" x="490" y="581"/><use href="#L55" xlink:href="#L55" x="498" y="581"/><use href="#L54" xlink:href="#L54" x="506" y="581"/></g>
<g fill="#000"><use href="#L43" xlink:href="#L43" x="490" y="589"/><use href="#L54" xlink:href="#L54" x="498" y="589"/><use href="#L52" xlink:href="#L52" x="506" y="589"/></g>
<rect x="519" y="578" width="28" height="21" fill="#1a1a4a" />
<rect x="519" y="578" width="27" height="20" fill="#fff" />
<rect x="520" y="579" width="26" height="19" fill="#6868d0" />
<g fill="#000"><use href="#L53" xlink:href="#L53" x="521" y="581"/><use href="#L57" xlink:href="#L57" x="529" y="581"/><use href="#L50" xlink:href="#L50" x="537" y="581"/></g>
<g fill="#000"><use href="#L31" xlink:href="#L31" x="521" y="589"/><use href="#L2d" xlink:href="#L2d" x="529" y="589"/><use href="#L32" xlink:href="#L32" x="537" y="589"/></g>
<rect x="550" y="578" width="28" height="21" fill="#1a1a4a" />
<rect x="550" y="578" width="27" height="20" fill="#fff" />
<rect x="551" y="579" width="26" height="19" fill="#6868d0" />
<g fill="#000"><use href="#L53" xlink:href="#L53" x="552" y="581"/><use href="#L4d" xlink:href="#L4d" x="560" y="581"/><use href="#L4f" xlink:href="#L4f" x="568" y="581"/></g>
<g fill="#000"><use href="#L4f" xlink:href="#L4f" x="552" y="589"/><use href="#L54" xlink:href="#L54" x="560" y="589"/><use href="#L48" xlink:href="#L48" x="568" y="589"/></g>
<rect x="586" y="578" width="33" height="21" fill="#fff" />
<rect x="586" y="578" width="32" height="20" fill="#000033" />
<g fill="#ffff00"><use href="#L52" xlink:href="#L52" x="591" y="585"/><use href="#L50" xlink:href="#L50" x="599" y="585"/><use href="#L54" xlink:href="#L54" x="607" y="585"/></g>
<rect x="622" y="578" width="33" height="21" fill="#1a1a4a" />
<rect x="622" y="578" width="32" height="20" fill="#fff" />
<rect x="623" y="579" width="31" height="19" fill="#6868d0" />
<g fill="#ffff00"><use href="#L53" xlink:href="#L53" x="627" y="585"/><use href="#L47" xlink:href="#L47" x="635" y="585"/><use href="#L4c" xlink:href="#L4c" x="643" y="585"/></g>
<rect x="658" y="578" width="33" height="21" fill="#1a1a4a" />
<rect x="658" y="578" width="32" height="20" fill="#fff" />
<rect x="659" y="579" width="31" height="19" fill="#6868d0" />
<g fill="#ffff00"><use href="#L53" xlink:href="#L53" x="663" y="585"/><use href="#L54" xlink:href="#L54" x="671" y="585"/><use href="#L50" xlink:href="#L50" x="679" y="585"/></g>
</svg></body></html>
